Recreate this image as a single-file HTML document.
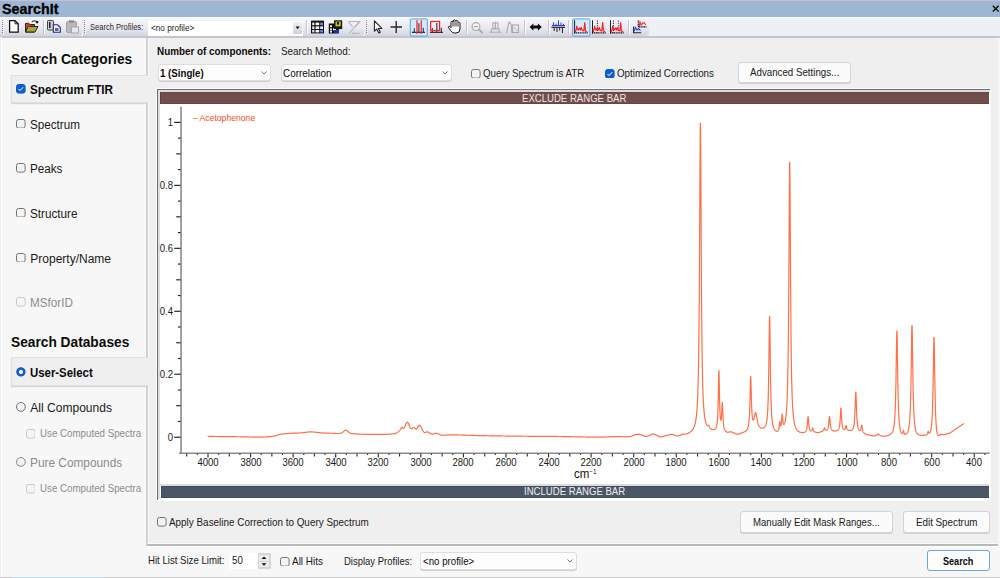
<!DOCTYPE html><html><head><meta charset="utf-8"><style>
html,body{margin:0;padding:0;width:1000px;height:578px;overflow:hidden;background:#f7f7f7;position:relative;font-family:"Liberation Sans", sans-serif}
.t{position:absolute;white-space:nowrap;line-height:1}
</style></head><body>
<div style="position:absolute;left:0px;top:0px;width:1000px;height:17px;background:#9db6d4"></div>
<div style="position:absolute;left:0px;top:0px;width:1000px;height:1px;background:#c9c0d6"></div>
<div class="t" id="t0" style="left:2.00px;top:1.90px;font-size:14.3px;font-weight:700;color:#050505;-webkit-text-stroke:0.35px #050505">SearchIt</div>
<svg style="position:absolute;left:991.6px;top:5.4px" width="7.5" height="7.5"><path d="M0.8 0.8 L6.6 6.6 M6.6 0.8 L0.8 6.6" stroke="#111" stroke-width="1.45"/></svg>
<div style="position:absolute;left:0px;top:17px;width:1000px;height:20px;background:#eef0f8"></div>
<div style="position:absolute;left:0px;top:17px;width:1000px;height:1px;background:#f9fafd"></div>
<div style="position:absolute;left:0px;top:36px;width:1000px;height:1.6px;background:#c4c6ce"></div>
<div style="position:absolute;left:0px;top:37.6px;width:1000px;height:1px;background:#fafafa"></div>
<div style="position:absolute;left:0px;top:18px;width:82px;height:18px;background:linear-gradient(#f6f7fb,#e8e9f1 55%,#d2d4e0);border-radius:0 0 3px 0"></div>
<div style="position:absolute;left:83px;top:18px;width:281px;height:18px;background:linear-gradient(#f6f7fb,#e8e9f1 55%,#d2d4e0);border-radius:0 0 3px 0"></div>
<div style="position:absolute;left:365px;top:18px;width:284px;height:18px;background:linear-gradient(#f6f7fb,#e8e9f1 55%,#d2d4e0);border-radius:0 0 3px 0"></div>
<svg style="position:absolute;left:2px;top:20px" width="3" height="15"><rect x="0" y="0" width="1" height="1" fill="#7d8294"/><rect x="1" y="1" width="1" height="1" fill="#ffffff"/><rect x="0" y="2" width="1" height="1" fill="#7d8294"/><rect x="1" y="3" width="1" height="1" fill="#ffffff"/><rect x="0" y="4" width="1" height="1" fill="#7d8294"/><rect x="1" y="5" width="1" height="1" fill="#ffffff"/><rect x="0" y="6" width="1" height="1" fill="#7d8294"/><rect x="1" y="7" width="1" height="1" fill="#ffffff"/><rect x="0" y="8" width="1" height="1" fill="#7d8294"/><rect x="1" y="9" width="1" height="1" fill="#ffffff"/><rect x="0" y="10" width="1" height="1" fill="#7d8294"/><rect x="1" y="11" width="1" height="1" fill="#ffffff"/><rect x="0" y="12" width="1" height="1" fill="#7d8294"/><rect x="1" y="13" width="1" height="1" fill="#ffffff"/></svg>
<svg style="position:absolute;left:84px;top:20px" width="3" height="15"><rect x="0" y="0" width="1" height="1" fill="#7d8294"/><rect x="1" y="1" width="1" height="1" fill="#ffffff"/><rect x="0" y="2" width="1" height="1" fill="#7d8294"/><rect x="1" y="3" width="1" height="1" fill="#ffffff"/><rect x="0" y="4" width="1" height="1" fill="#7d8294"/><rect x="1" y="5" width="1" height="1" fill="#ffffff"/><rect x="0" y="6" width="1" height="1" fill="#7d8294"/><rect x="1" y="7" width="1" height="1" fill="#ffffff"/><rect x="0" y="8" width="1" height="1" fill="#7d8294"/><rect x="1" y="9" width="1" height="1" fill="#ffffff"/><rect x="0" y="10" width="1" height="1" fill="#7d8294"/><rect x="1" y="11" width="1" height="1" fill="#ffffff"/><rect x="0" y="12" width="1" height="1" fill="#7d8294"/><rect x="1" y="13" width="1" height="1" fill="#ffffff"/></svg>
<svg style="position:absolute;left:366px;top:20px" width="3" height="15"><rect x="0" y="0" width="1" height="1" fill="#7d8294"/><rect x="1" y="1" width="1" height="1" fill="#ffffff"/><rect x="0" y="2" width="1" height="1" fill="#7d8294"/><rect x="1" y="3" width="1" height="1" fill="#ffffff"/><rect x="0" y="4" width="1" height="1" fill="#7d8294"/><rect x="1" y="5" width="1" height="1" fill="#ffffff"/><rect x="0" y="6" width="1" height="1" fill="#7d8294"/><rect x="1" y="7" width="1" height="1" fill="#ffffff"/><rect x="0" y="8" width="1" height="1" fill="#7d8294"/><rect x="1" y="9" width="1" height="1" fill="#ffffff"/><rect x="0" y="10" width="1" height="1" fill="#7d8294"/><rect x="1" y="11" width="1" height="1" fill="#ffffff"/><rect x="0" y="12" width="1" height="1" fill="#7d8294"/><rect x="1" y="13" width="1" height="1" fill="#ffffff"/></svg>
<div style="position:absolute;left:43px;top:20px;width:1px;height:14px;background:#c3c6d2;box-shadow:1px 0 0 #fff"></div>
<div style="position:absolute;left:306px;top:20px;width:1px;height:14px;background:#c3c6d2;box-shadow:1px 0 0 #fff"></div>
<div style="position:absolute;left:466px;top:20px;width:1px;height:14px;background:#c3c6d2;box-shadow:1px 0 0 #fff"></div>
<div style="position:absolute;left:524px;top:20px;width:1px;height:14px;background:#c3c6d2;box-shadow:1px 0 0 #fff"></div>
<div style="position:absolute;left:548px;top:20px;width:1px;height:14px;background:#c3c6d2;box-shadow:1px 0 0 #fff"></div>
<div style="position:absolute;left:568px;top:20px;width:1px;height:14px;background:#c3c6d2;box-shadow:1px 0 0 #fff"></div>
<div style="position:absolute;left:628px;top:20px;width:1px;height:14px;background:#c3c6d2;box-shadow:1px 0 0 #fff"></div>
<div class="t" id="t1" style="left:89.80px;top:23.20px;font-size:8.5px;font-weight:400;color:#2b2b2b;transform:scaleX(0.8871);transform-origin:left center;">Search Profiles:</div>
<div style="position:absolute;left:148px;top:21px;width:154px;height:15px;background:#fff;border-left:1px solid #fff"></div>
<div class="t" id="t2" style="left:151.20px;top:24.01px;font-size:8.5px;font-weight:400;color:#1a1a1a;transform:scaleX(0.9624);transform-origin:left center;">&lt;no profile&gt;</div>
<div style="position:absolute;left:293px;top:22px;width:9px;height:12px;background:linear-gradient(#f0f1f6,#cdd0dc)"></div>
<svg style="position:absolute;left:0;top:0" width="1000" height="40"><path d="M295.6 26.6 H299.6 L297.6 29.2 Z" fill="#111"/><path d="M9.6 20.6 H15 L18.2 23.8 V32.2 H9.6 Z" fill="#fff" stroke="#111" stroke-width="1.25"/><path d="M15 20.6 V23.8 H18.2" fill="none" stroke="#111" stroke-width="0.9"/><path d="M25.5 23.5 H29 L30 24.5 H34.5 V32 H25.5 Z" fill="#7d7d18" stroke="#222" stroke-width="1"/><path d="M25.5 32 L28 26.5 H38 L35 32 Z" fill="#a8a82c" stroke="#222" stroke-width="1"/><path d="M27.5 22 L31.5 25.5 L27.5 28 Z" fill="#e82020"/><path d="M32 22 Q34 19.8 36.5 21.5" stroke="#333" fill="none" stroke-width="1.1"/><rect x="36" y="21" width="2.2" height="2.2" fill="#111"/><rect x="47.5" y="20.5" width="6" height="9.5" rx="0.8" fill="#cfcfcf" stroke="#444" stroke-width="1"/><rect x="49" y="22" width="1.5" height="6" fill="#222"/><path d="M53.3 24.8 H57.6 L60.3 27.5 V32.3 H53.3 Z" fill="#f0f0f8" stroke="#2424a0" stroke-width="1.1"/><rect x="55" y="28" width="3.5" height="3" fill="#666"/><rect x="66.5" y="21.5" width="10" height="11" rx="1.5" fill="#b8b8b8" stroke="#a4a4a4"/><rect x="69" y="20.3" width="5" height="2.4" fill="#8e8e8e"/><rect x="71.5" y="27" width="7" height="6" fill="#e6e6e6" stroke="#a8a8a8"/><rect x="311" y="20.6" width="13" height="12.8" fill="#111"/><rect x="312.2" y="22.6" width="2.2" height="2.6" fill="#eee"/><rect x="312.2" y="26.4" width="2.2" height="2.6" fill="#eee"/><rect x="312.2" y="30.0" width="2.2" height="2.4" fill="#eee"/><rect x="315.6" y="22.6" width="3.6" height="2.6" fill="#fff"/><rect x="315.6" y="26.4" width="3.6" height="2.6" fill="#fff"/><rect x="315.6" y="30.0" width="3.6" height="2.4" fill="#fff"/><rect x="320.2" y="22.6" width="2.8" height="2.6" fill="#6f86f0"/><rect x="320.2" y="26.4" width="2.8" height="2.6" fill="#f4f4ff"/><rect x="320.2" y="30.0" width="2.8" height="2.4" fill="#6f86f0"/><rect x="328.8" y="23.5" width="10" height="10" fill="#111"/><rect x="330" y="25.2" width="2" height="2" fill="#eee"/><rect x="330" y="28.4" width="2" height="2" fill="#eee"/><rect x="330" y="31" width="2" height="1.6" fill="#eee"/><rect x="333" y="28.4" width="3" height="2" fill="#fff"/><rect x="334" y="20.3" width="8.2" height="8.8" fill="#1a1a1a"/><rect x="335.5" y="21.5" width="5.2" height="4.8" fill="#c8c820"/><rect x="337" y="22" width="2" height="2.6" fill="#111"/><rect x="334" y="30" width="4.5" height="3" fill="#1830c8"/><path d="M348.5 21.5 H360 L355 27 M352.5 27 L348.5 21.5" fill="none" stroke="#b4b4b4" stroke-width="1.1"/><path d="M349 33.5 L359.5 21.5" stroke="#b4b4b4" stroke-width="1.1"/><path d="M352 33.3 H359.5" stroke="#b4b4b4" stroke-width="1.1"/><path d="M374.4 20.8 V31.2 L376.8 29 L378.8 33 L380.3 32.2 L378.4 28.4 H381.8 Z" fill="#fff" stroke="#222" stroke-width="1.05" stroke-linejoin="round"/><path d="M396.2 21 V33 M390.5 27 H402" stroke="#2a2a2a" stroke-width="1.4"/><rect x="410.3" y="18.9" width="17" height="17.2" rx="1" fill="#d6e9f8" stroke="#5aa0e8" stroke-width="1"/><rect x="572.7" y="18.9" width="17.2" height="17.2" rx="1" fill="#d6e9f8" stroke="#5aa0e8" stroke-width="1"/><path d="M411.9 32.3 H425.1" stroke="#111" stroke-width="1.1"/><path d="M414.3 28.3 V32.3 M418.9 23.2 V32.3 M423.3 27.7 V32.3" stroke="#2a3a3a" stroke-width="1.1"/><path d="M417 20.2 V34 M421.3 20.2 V34" stroke="#ff2a2a" stroke-width="1.3"/><path d="M430 32.3 H442.9" stroke="#111" stroke-width="1.1"/><path d="M432.3 28 V32.3 M436.8 23 V32.3 M441.3 27.7 V32.3" stroke="#2a3a3a" stroke-width="1.1"/><rect x="430.6" y="21.5" width="9" height="9" fill="none" stroke="#ff2020" stroke-width="1.2"/><path d="M451 27.5 V22.5 Q451 21.3 452.2 21.3 Q453.3 21.3 453.3 22.5 V21 Q453.3 19.9 454.5 19.9 Q455.6 19.9 455.6 21 V21.5 Q455.6 20.5 456.8 20.5 Q457.9 20.5 457.9 21.6 V23 Q457.9 22.2 458.9 22.2 Q460 22.2 460 23.3 V29 Q460 33 456 33 H454.5 Q452.5 33 451.3 31.3 L448.5 27.6 Q448 26.6 449 26.3 Q449.8 26.1 450.5 27 Z" fill="#fff" stroke="#111" stroke-width="1"/><path d="M451.5 22.6 V26.5 H459.5 V23.2 Q459 22.6 458.4 23 V21.7 Q457.5 20.9 456.5 21.4 Q455.5 20.4 454.5 20.4 Q453.6 20.6 453.5 22 Q452.4 21.7 451.5 22.6 Z" fill="#9a9a9a"/><circle cx="476" cy="26.6" r="3.9" fill="#f4f4f4" stroke="#a8a8a8" stroke-width="1.2"/><path d="M474 26.6 H478" stroke="#a0a0a0" stroke-width="1.1"/><path d="M479 29.6 L482.6 33" stroke="#a8a8a8" stroke-width="1.9"/><path d="M489 32.2 H501.5 M491.5 32 V29 H499 V32" fill="none" stroke="#b0b0b0" stroke-width="1.1"/><rect x="492.8" y="23" width="5.2" height="5.2" fill="none" stroke="#acacac" stroke-width="1.1"/><path d="M495.4 21.8 V29" stroke="#acacac" stroke-width="1.1"/><path d="M506.5 33 L509 22 L511 24 L512 33" fill="none" stroke="#a8a8a8" stroke-width="1.1"/><rect x="512.5" y="25" width="6" height="7.5" fill="none" stroke="#a8a8a8" stroke-width="1.1"/><path d="M514 27 L517 30.5" stroke="#b8b8b8" stroke-width="1"/><path d="M529.6 27 L533.4 23.4 V25.6 H537.9 V23.4 L541.7 27 L537.9 30.7 V28.5 H533.4 V30.7 Z" fill="#0a0a0a"/><path d="M552 25.5 H565" stroke="#2a36e8" stroke-width="1.1"/><path d="M553.5 22.3 V25.5 M556 23.6 V25.5 M558.5 20.5 V25.5 M561 22.5 V25.5 M563.5 23.8 V25.5" stroke="#3340f0" stroke-width="1"/><path d="M551.5 27.3 H565" stroke="#222" stroke-width="1.2"/><path d="M554.2 27.5 V31 M557 27.5 V32 M559.6 27.5 V30.5 M562.5 27.5 V33" stroke="#333" stroke-width="1.1"/><path d="M574.5999999999999 20.2 V33.6" stroke="#222" stroke-width="1"/><path d="M574.3 32.8 H587.8" stroke="#111" stroke-width="1.3" stroke-dasharray="1.2 0.6"/><path d="M575.3 32 L576.3 29 L576.8 26 L577.3 29 L578.3 30 L579.3 28 L580.3 30 L581.3 27.5 L582.3 30.5 L583.8 31 L584.8 22.7 L585.5 31 L587.3 32" fill="none" stroke="#ff2020" stroke-width="1.2" stroke-linejoin="round"/><path d="M592.5 20.2 V33.6" stroke="#222" stroke-width="1"/><path d="M592.2 32.8 H605.7" stroke="#111" stroke-width="1.3" stroke-dasharray="1.2 0.6"/><path d="M597.4000000000001 20.5 V32.5" stroke="#222" stroke-width="1" stroke-dasharray="1.3 1"/><path d="M593.2 32 L594.2 29 L594.7 26 L595.2 29 L596.2 30 L597.2 28 L598.2 30 L599.2 27.5 L600.2 30.5 L601.7 31 L602.7 22.7 L603.4000000000001 31 L605.2 32" fill="none" stroke="#ff2020" stroke-width="1.2" stroke-linejoin="round"/><path d="M610.5 20.2 V33.6" stroke="#222" stroke-width="1"/><path d="M610.2 32.8 H623.7" stroke="#111" stroke-width="1.3" stroke-dasharray="1.2 0.6"/><path d="M613.4000000000001 20.5 V32.5" stroke="#222" stroke-width="1" stroke-dasharray="1.3 1"/><path d="M618.4000000000001 20.5 V32.5" stroke="#4040c0" stroke-width="1" stroke-dasharray="1.3 1"/><path d="M611.2 32 L612.2 29 L612.7 26 L613.2 29 L614.2 30 L615.2 28 L616.2 30 L617.2 27.5 L618.2 30.5 L619.7 31 L620.7 22.7 L621.4000000000001 31 L623.2 32" fill="none" stroke="#ff2020" stroke-width="1.2" stroke-linejoin="round"/><path d="M638.3 20.6 V26.9 H646.5" stroke="#111" stroke-width="1.1" fill="none" stroke-dasharray="1.2 0.5"/><path d="M639.2 26 L640 22 L641 25 L642.5 23.5 L644 22.5 L646 25" stroke="#ff2a2a" stroke-width="1.1" fill="none"/><path d="M633.6 26.5 V32.8 H641.2" stroke="#222" stroke-width="1.1" fill="none"/><path d="M634.3 31 L635.5 27.5 L637 30 L638.5 28.5 L640.5 30.5" stroke="#3a3af0" stroke-width="1.1" fill="none"/></svg>
<div style="position:absolute;left:146px;top:38px;width:852px;height:506px;background:#efefef;border-left:2px solid #d2d2d2;border-bottom:2px solid #b9b9b9;box-shadow:inset 1px -1px 0 #fafafa, 0 1px 0 #fff"></div>
<div style="position:absolute;left:998px;top:38px;width:2px;height:508px;background:#f6f6f6"></div>
<div style="position:absolute;left:1px;top:37px;width:1px;height:541px;background:#fff"></div>
<div style="position:absolute;left:0px;top:37px;width:1px;height:541px;background:#eceef6"></div>
<div class="t" id="t3" style="left:10.70px;top:51.00px;font-size:15.5px;font-weight:700;color:#0b0b0b;transform:scaleX(0.8910);transform-origin:left center;">Search Categories</div>
<div style="position:absolute;left:11px;top:74.5px;width:135px;height:26px;background:#efefef;border:1px solid #e0e0e0;border-right:none;box-shadow:0 1px 1px #d6d6d6"></div>
<div style="position:absolute;left:145px;top:75.5px;width:5px;height:26px;background:#efefef"></div>
<svg style="position:absolute;left:16px;top:84px" width="9.6" height="9.6"><rect x="0.5" y="0.5" width="8.6" height="8.6" rx="2" fill="#0b5ecb" stroke="#0b5ecb"/><path d="M2.4 4.9 L4.1 6.6 L7.2 3.2" stroke="#fff" stroke-width="1" fill="none"/></svg>
<div class="t" id="t4" style="left:30.30px;top:84.01px;font-size:12.0px;font-weight:700;color:#0b0b0b;transform:scaleX(0.9725);transform-origin:left center;">Spectrum FTIR</div>
<svg style="position:absolute;left:16px;top:118.6px" width="9.6" height="9.6"><rect x="0.5" y="0.5" width="8.6" height="8.6" rx="2" fill="#f3f3f3" stroke="#747474"/></svg>
<div class="t" id="t5" style="left:30.30px;top:118.60px;font-size:12.0px;font-weight:400;color:#1a1a1a;transform:scaleX(0.9733);transform-origin:left center;">Spectrum</div>
<svg style="position:absolute;left:16px;top:163.2px" width="9.6" height="9.6"><rect x="0.5" y="0.5" width="8.6" height="8.6" rx="2" fill="#f3f3f3" stroke="#747474"/></svg>
<div class="t" id="t6" style="left:30.30px;top:163.21px;font-size:12.0px;font-weight:400;color:#1a1a1a;transform:scaleX(0.9733);transform-origin:left center;">Peaks</div>
<svg style="position:absolute;left:16px;top:207.9px" width="9.6" height="9.6"><rect x="0.5" y="0.5" width="8.6" height="8.6" rx="2" fill="#f3f3f3" stroke="#747474"/></svg>
<div class="t" id="t7" style="left:30.30px;top:207.91px;font-size:12.0px;font-weight:400;color:#1a1a1a;transform:scaleX(0.9733);transform-origin:left center;">Structure</div>
<svg style="position:absolute;left:16px;top:252.5px" width="9.6" height="9.6"><rect x="0.5" y="0.5" width="8.6" height="8.6" rx="2" fill="#f3f3f3" stroke="#747474"/></svg>
<div class="t" id="t8" style="left:30.30px;top:252.51px;font-size:12.0px;font-weight:400;color:#1a1a1a;">Property/Name</div>
<svg style="position:absolute;left:16px;top:297px" width="9.6" height="9.6"><rect x="0.5" y="0.5" width="8.6" height="8.6" rx="2" fill="#f5f5f5" stroke="#c9c9c9"/></svg>
<div class="t" id="t9" style="left:30.30px;top:297.01px;font-size:12.0px;font-weight:400;color:#8c8c8c;transform:scaleX(0.9733);transform-origin:left center;">MSforID</div>
<div class="t" id="t10" style="left:10.70px;top:334.20px;font-size:15.5px;font-weight:700;color:#0b0b0b;transform:scaleX(0.8858);transform-origin:left center;">Search Databases</div>
<div style="position:absolute;left:11px;top:357px;width:135px;height:26.5px;background:#efefef;border:1px solid #e0e0e0;border-right:none;box-shadow:0 1px 1px #d6d6d6"></div>
<div style="position:absolute;left:145px;top:358px;width:5px;height:26.5px;background:#efefef"></div>
<svg style="position:absolute;left:16px;top:367px" width="9.8" height="9.8"><circle cx="4.9" cy="4.9" r="3.4000000000000004" fill="#fff" stroke="#0b5ecb" stroke-width="2.6"/></svg>
<div class="t" id="t11" style="left:30.30px;top:366.60px;font-size:12.0px;font-weight:700;color:#0b0b0b;transform:scaleX(0.9492);transform-origin:left center;">User-Select</div>
<svg style="position:absolute;left:16px;top:402px" width="9.8" height="9.8"><circle cx="4.9" cy="4.9" r="4.4" fill="#f3f3f3" stroke="#6e6e6e"/></svg>
<div class="t" id="t12" style="left:30.30px;top:401.50px;font-size:12.05px;font-weight:400;color:#1a1a1a;">All Compounds</div>
<svg style="position:absolute;left:25.6px;top:429px" width="9.6" height="9.6"><rect x="0.5" y="0.5" width="8.6" height="8.6" rx="2" fill="#f5f5f5" stroke="#c9c9c9"/></svg>
<div class="t" id="t13" style="left:39.80px;top:429.31px;font-size:10.25px;font-weight:400;color:#8c8c8c;transform:scaleX(0.9502);transform-origin:left center;">Use Computed Spectra</div>
<svg style="position:absolute;left:16px;top:457px" width="9.8" height="9.8"><circle cx="4.9" cy="4.9" r="4.4" fill="#f3f3f3" stroke="#8a8a8a"/></svg>
<div class="t" id="t14" style="left:30.30px;top:456.71px;font-size:12.0px;font-weight:400;color:#8c8c8c;transform:scaleX(0.9875);transform-origin:left center;">Pure Compounds</div>
<svg style="position:absolute;left:25.6px;top:484px" width="9.6" height="9.6"><rect x="0.5" y="0.5" width="8.6" height="8.6" rx="2" fill="#f5f5f5" stroke="#c9c9c9"/></svg>
<div class="t" id="t15" style="left:39.80px;top:484.31px;font-size:10.25px;font-weight:400;color:#8c8c8c;transform:scaleX(0.9502);transform-origin:left center;">Use Computed Spectra</div>
<div class="t" id="t16" style="left:157.00px;top:46.62px;font-size:10.25px;font-weight:700;color:#0b0b0b;transform:scaleX(0.9629);transform-origin:left center;">Number of components:</div>
<div class="t" id="t17" style="left:280.60px;top:46.62px;font-size:10.25px;font-weight:400;color:#1a1a1a;transform:scaleX(0.9590);transform-origin:left center;">Search Method:</div>
<div style="position:absolute;left:157.5px;top:64.3px;width:111px;height:15px;background:#fdfdfd;border:1px solid #dedede;border-radius:3px;box-shadow:0 1px 0 #d0d0d0"></div>
<div class="t" id="t18" style="left:160.30px;top:68.81px;font-size:10.25px;font-weight:700;color:#0b0b0b;transform:scaleX(0.9463);transform-origin:left center;">1 (Single)</div>
<svg style="position:absolute;left:261.0px;top:71.3px" width="7" height="4"><path d="M0.5 0.5 L3 3 L5.5 0.5" stroke="#6a6a6a" stroke-width="0.9" fill="none"/></svg>
<div style="position:absolute;left:280.6px;top:64.3px;width:169px;height:15px;background:#fdfdfd;border:1px solid #dedede;border-radius:3px;box-shadow:0 1px 0 #d0d0d0"></div>
<div class="t" id="t19" style="left:283.20px;top:68.81px;font-size:10.25px;font-weight:400;color:#0b0b0b;transform:scaleX(0.9678);transform-origin:left center;">Correlation</div>
<svg style="position:absolute;left:442.1px;top:71.3px" width="7" height="4"><path d="M0.5 0.5 L3 3 L5.5 0.5" stroke="#6a6a6a" stroke-width="0.9" fill="none"/></svg>
<svg style="position:absolute;left:471px;top:68.8px" width="9.6" height="9.6"><rect x="0.5" y="0.5" width="8.6" height="8.6" rx="2" fill="#f3f3f3" stroke="#747474"/></svg>
<div class="t" id="t20" style="left:482.80px;top:68.62px;font-size:10.25px;font-weight:400;color:#1a1a1a;transform:scaleX(0.9463);transform-origin:left center;">Query Spectrum is ATR</div>
<svg style="position:absolute;left:605px;top:68.8px" width="9.6" height="9.6"><rect x="0.5" y="0.5" width="8.6" height="8.6" rx="2" fill="#0b5ecb" stroke="#0b5ecb"/><path d="M2.4 4.9 L4.1 6.6 L7.2 3.2" stroke="#fff" stroke-width="1" fill="none"/></svg>
<div class="t" id="t21" style="left:616.80px;top:68.62px;font-size:10.25px;font-weight:400;color:#1a1a1a;transform:scaleX(0.9561);transform-origin:left center;">Optimized Corrections</div>
<div style="position:absolute;left:738px;top:62px;width:111px;height:19px;background:#fbfbfb;border:1px solid #d4d4d4;border-radius:3px;box-shadow:0 1px 0 #d0d0d0"></div>
<div class="t" id="t22" style="left:750.00px;top:68.01px;font-size:10.25px;font-weight:400;color:#1a1a1a;transform:scaleX(0.9483);transform-origin:left center;">Advanced Settings...</div>
<div style="position:absolute;left:156px;top:87.5px;width:835px;height:413.5px;background:#fafafa"></div>
<div style="position:absolute;left:157px;top:89px;width:833.3px;height:410.6px;background:#fff;border-top:1px solid #707272;border-left:1px solid #6e6e6e;box-sizing:border-box"></div>
<div style="position:absolute;left:158px;top:90px;width:832px;height:2px;background:#dcdcdc"></div>
<div style="position:absolute;left:158px;top:90px;width:1.8px;height:409px;background:#dedede"></div>
<div style="position:absolute;left:160.3px;top:92px;width:828.7px;height:12.3px;background:#714d4c;box-shadow:inset 0 1px 0 #684443, inset 0 -1px 0 #684443, inset 1px 0 0 #5e3a3a"></div>
<div style="position:absolute;left:160.3px;top:484.2px;width:828.7px;height:1.7px;background:#dcdde0"></div>
<div class="t" id="t23" style="left:521.90px;top:93.81px;font-size:10.25px;font-weight:400;color:#efe6e6;transform:scaleX(0.9346);transform-origin:left center;">EXCLUDE RANGE BAR</div>
<div style="position:absolute;left:160.5px;top:485.9px;width:828.4px;height:12.2px;background:#4b5766;box-shadow:inset 0 1px 0 #414b5a, inset 0 -1px 0 #414b5a, inset 1px 0 0 #3e4858"></div>
<div class="t" id="t24" style="left:523.70px;top:486.81px;font-size:10.25px;font-weight:400;color:#eef0f3;transform:scaleX(0.9346);transform-origin:left center;">INCLUDE RANGE BAR</div>
<svg style="position:absolute;left:0;top:0" width="1000" height="578"><path d="M181.05 106.8 V454" stroke="#979797" stroke-width="1.8" fill="none"/><path d="M179 453.25 H989.5" stroke="#8a8a8a" stroke-width="1.5" fill="none"/><path d="M174.20 437.20 H180.6" stroke="#222" stroke-width="1.15"/><path d="M178.00 421.46 H180.6" stroke="#222" stroke-width="1.15"/><path d="M176.20 405.72 H180.6" stroke="#222" stroke-width="1.15"/><path d="M178.00 389.98 H180.6" stroke="#222" stroke-width="1.15"/><path d="M174.20 374.24 H180.6" stroke="#222" stroke-width="1.15"/><path d="M178.00 358.50 H180.6" stroke="#222" stroke-width="1.15"/><path d="M176.20 342.76 H180.6" stroke="#222" stroke-width="1.15"/><path d="M178.00 327.02 H180.6" stroke="#222" stroke-width="1.15"/><path d="M174.20 311.28 H180.6" stroke="#222" stroke-width="1.15"/><path d="M178.00 295.54 H180.6" stroke="#222" stroke-width="1.15"/><path d="M176.20 279.80 H180.6" stroke="#222" stroke-width="1.15"/><path d="M178.00 264.06 H180.6" stroke="#222" stroke-width="1.15"/><path d="M174.20 248.32 H180.6" stroke="#222" stroke-width="1.15"/><path d="M178.00 232.58 H180.6" stroke="#222" stroke-width="1.15"/><path d="M176.20 216.84 H180.6" stroke="#222" stroke-width="1.15"/><path d="M178.00 201.10 H180.6" stroke="#222" stroke-width="1.15"/><path d="M174.20 185.36 H180.6" stroke="#222" stroke-width="1.15"/><path d="M178.00 169.62 H180.6" stroke="#222" stroke-width="1.15"/><path d="M176.20 153.88 H180.6" stroke="#222" stroke-width="1.15"/><path d="M178.00 138.14 H180.6" stroke="#222" stroke-width="1.15"/><path d="M174.20 122.40 H180.6" stroke="#222" stroke-width="1.15"/><path d="M186.72 453.6 V456.40" stroke="#2a2a2a" stroke-width="1.1"/><path d="M197.36 453.6 V455.00" stroke="#2a2a2a" stroke-width="1.1"/><path d="M208.00 453.6 V457.60" stroke="#2a2a2a" stroke-width="1.1"/><path d="M218.64 453.6 V455.00" stroke="#2a2a2a" stroke-width="1.1"/><path d="M229.28 453.6 V456.40" stroke="#2a2a2a" stroke-width="1.1"/><path d="M239.93 453.6 V455.00" stroke="#2a2a2a" stroke-width="1.1"/><path d="M250.57 453.6 V457.60" stroke="#2a2a2a" stroke-width="1.1"/><path d="M261.21 453.6 V455.00" stroke="#2a2a2a" stroke-width="1.1"/><path d="M271.86 453.6 V456.40" stroke="#2a2a2a" stroke-width="1.1"/><path d="M282.50 453.6 V455.00" stroke="#2a2a2a" stroke-width="1.1"/><path d="M293.14 453.6 V457.60" stroke="#2a2a2a" stroke-width="1.1"/><path d="M303.78 453.6 V455.00" stroke="#2a2a2a" stroke-width="1.1"/><path d="M314.43 453.6 V456.40" stroke="#2a2a2a" stroke-width="1.1"/><path d="M325.07 453.6 V455.00" stroke="#2a2a2a" stroke-width="1.1"/><path d="M335.71 453.6 V457.60" stroke="#2a2a2a" stroke-width="1.1"/><path d="M346.35 453.6 V455.00" stroke="#2a2a2a" stroke-width="1.1"/><path d="M357.00 453.6 V456.40" stroke="#2a2a2a" stroke-width="1.1"/><path d="M367.64 453.6 V455.00" stroke="#2a2a2a" stroke-width="1.1"/><path d="M378.28 453.6 V457.60" stroke="#2a2a2a" stroke-width="1.1"/><path d="M388.92 453.6 V455.00" stroke="#2a2a2a" stroke-width="1.1"/><path d="M399.56 453.6 V456.40" stroke="#2a2a2a" stroke-width="1.1"/><path d="M410.21 453.6 V455.00" stroke="#2a2a2a" stroke-width="1.1"/><path d="M420.85 453.6 V457.60" stroke="#2a2a2a" stroke-width="1.1"/><path d="M431.49 453.6 V455.00" stroke="#2a2a2a" stroke-width="1.1"/><path d="M442.13 453.6 V456.40" stroke="#2a2a2a" stroke-width="1.1"/><path d="M452.78 453.6 V455.00" stroke="#2a2a2a" stroke-width="1.1"/><path d="M463.42 453.6 V457.60" stroke="#2a2a2a" stroke-width="1.1"/><path d="M474.06 453.6 V455.00" stroke="#2a2a2a" stroke-width="1.1"/><path d="M484.71 453.6 V456.40" stroke="#2a2a2a" stroke-width="1.1"/><path d="M495.35 453.6 V455.00" stroke="#2a2a2a" stroke-width="1.1"/><path d="M505.99 453.6 V457.60" stroke="#2a2a2a" stroke-width="1.1"/><path d="M516.63 453.6 V455.00" stroke="#2a2a2a" stroke-width="1.1"/><path d="M527.28 453.6 V456.40" stroke="#2a2a2a" stroke-width="1.1"/><path d="M537.92 453.6 V455.00" stroke="#2a2a2a" stroke-width="1.1"/><path d="M548.56 453.6 V457.60" stroke="#2a2a2a" stroke-width="1.1"/><path d="M559.20 453.6 V455.00" stroke="#2a2a2a" stroke-width="1.1"/><path d="M569.85 453.6 V456.40" stroke="#2a2a2a" stroke-width="1.1"/><path d="M580.49 453.6 V455.00" stroke="#2a2a2a" stroke-width="1.1"/><path d="M591.13 453.6 V457.60" stroke="#2a2a2a" stroke-width="1.1"/><path d="M601.77 453.6 V455.00" stroke="#2a2a2a" stroke-width="1.1"/><path d="M612.41 453.6 V456.40" stroke="#2a2a2a" stroke-width="1.1"/><path d="M623.06 453.6 V455.00" stroke="#2a2a2a" stroke-width="1.1"/><path d="M633.70 453.6 V457.60" stroke="#2a2a2a" stroke-width="1.1"/><path d="M644.34 453.6 V455.00" stroke="#2a2a2a" stroke-width="1.1"/><path d="M654.99 453.6 V456.40" stroke="#2a2a2a" stroke-width="1.1"/><path d="M665.63 453.6 V455.00" stroke="#2a2a2a" stroke-width="1.1"/><path d="M676.27 453.6 V457.60" stroke="#2a2a2a" stroke-width="1.1"/><path d="M686.91 453.6 V455.00" stroke="#2a2a2a" stroke-width="1.1"/><path d="M697.56 453.6 V456.40" stroke="#2a2a2a" stroke-width="1.1"/><path d="M708.20 453.6 V455.00" stroke="#2a2a2a" stroke-width="1.1"/><path d="M718.84 453.6 V457.60" stroke="#2a2a2a" stroke-width="1.1"/><path d="M729.48 453.6 V455.00" stroke="#2a2a2a" stroke-width="1.1"/><path d="M740.12 453.6 V456.40" stroke="#2a2a2a" stroke-width="1.1"/><path d="M750.77 453.6 V455.00" stroke="#2a2a2a" stroke-width="1.1"/><path d="M761.41 453.6 V457.60" stroke="#2a2a2a" stroke-width="1.1"/><path d="M772.05 453.6 V455.00" stroke="#2a2a2a" stroke-width="1.1"/><path d="M782.70 453.6 V456.40" stroke="#2a2a2a" stroke-width="1.1"/><path d="M793.34 453.6 V455.00" stroke="#2a2a2a" stroke-width="1.1"/><path d="M803.98 453.6 V457.60" stroke="#2a2a2a" stroke-width="1.1"/><path d="M814.62 453.6 V455.00" stroke="#2a2a2a" stroke-width="1.1"/><path d="M825.26 453.6 V456.40" stroke="#2a2a2a" stroke-width="1.1"/><path d="M835.91 453.6 V455.00" stroke="#2a2a2a" stroke-width="1.1"/><path d="M846.55 453.6 V457.60" stroke="#2a2a2a" stroke-width="1.1"/><path d="M857.19 453.6 V455.00" stroke="#2a2a2a" stroke-width="1.1"/><path d="M867.84 453.6 V456.40" stroke="#2a2a2a" stroke-width="1.1"/><path d="M878.48 453.6 V455.00" stroke="#2a2a2a" stroke-width="1.1"/><path d="M889.12 453.6 V457.60" stroke="#2a2a2a" stroke-width="1.1"/><path d="M899.76 453.6 V455.00" stroke="#2a2a2a" stroke-width="1.1"/><path d="M910.41 453.6 V456.40" stroke="#2a2a2a" stroke-width="1.1"/><path d="M921.05 453.6 V455.00" stroke="#2a2a2a" stroke-width="1.1"/><path d="M931.69 453.6 V457.60" stroke="#2a2a2a" stroke-width="1.1"/><path d="M942.33 453.6 V455.00" stroke="#2a2a2a" stroke-width="1.1"/><path d="M952.98 453.6 V456.40" stroke="#2a2a2a" stroke-width="1.1"/><path d="M963.62 453.6 V455.00" stroke="#2a2a2a" stroke-width="1.1"/><path d="M974.26 453.6 V457.60" stroke="#2a2a2a" stroke-width="1.1"/><path d="M984.90 453.6 V455.00" stroke="#2a2a2a" stroke-width="1.1"/></svg>
<div class="t" id="t25" style="left:133.00px;top:432.01px;font-size:10.6px;font-weight:400;color:#1a1a1a;width:40px;text-align:right;transform:scaleX(0.9);transform-origin:right center">0</div>
<div class="t" id="t26" style="left:133.00px;top:369.04px;font-size:10.6px;font-weight:400;color:#1a1a1a;width:40px;text-align:right;transform:scaleX(0.9);transform-origin:right center">0.2</div>
<div class="t" id="t27" style="left:133.00px;top:306.08px;font-size:10.6px;font-weight:400;color:#1a1a1a;width:40px;text-align:right;transform:scaleX(0.9);transform-origin:right center">0.4</div>
<div class="t" id="t28" style="left:133.00px;top:243.13px;font-size:10.6px;font-weight:400;color:#1a1a1a;width:40px;text-align:right;transform:scaleX(0.9);transform-origin:right center">0.6</div>
<div class="t" id="t29" style="left:133.00px;top:180.16px;font-size:10.6px;font-weight:400;color:#1a1a1a;width:40px;text-align:right;transform:scaleX(0.9);transform-origin:right center">0.8</div>
<div class="t" id="t30" style="left:133.00px;top:117.21px;font-size:10.6px;font-weight:400;color:#1a1a1a;width:40px;text-align:right;transform:scaleX(0.9);transform-origin:right center">1</div>
<div class="t" id="t31" style="left:178.00px;top:456.71px;font-size:10.6px;font-weight:400;color:#1a1a1a;width:60px;text-align:center;transform:scaleX(0.9);transform-origin:center">4000</div>
<div class="t" id="t32" style="left:220.57px;top:456.71px;font-size:10.6px;font-weight:400;color:#1a1a1a;width:60px;text-align:center;transform:scaleX(0.9);transform-origin:center">3800</div>
<div class="t" id="t33" style="left:263.14px;top:456.71px;font-size:10.6px;font-weight:400;color:#1a1a1a;width:60px;text-align:center;transform:scaleX(0.9);transform-origin:center">3600</div>
<div class="t" id="t34" style="left:305.71px;top:456.71px;font-size:10.6px;font-weight:400;color:#1a1a1a;width:60px;text-align:center;transform:scaleX(0.9);transform-origin:center">3400</div>
<div class="t" id="t35" style="left:348.28px;top:456.71px;font-size:10.6px;font-weight:400;color:#1a1a1a;width:60px;text-align:center;transform:scaleX(0.9);transform-origin:center">3200</div>
<div class="t" id="t36" style="left:390.85px;top:456.71px;font-size:10.6px;font-weight:400;color:#1a1a1a;width:60px;text-align:center;transform:scaleX(0.9);transform-origin:center">3000</div>
<div class="t" id="t37" style="left:433.42px;top:456.71px;font-size:10.6px;font-weight:400;color:#1a1a1a;width:60px;text-align:center;transform:scaleX(0.9);transform-origin:center">2800</div>
<div class="t" id="t38" style="left:475.99px;top:456.71px;font-size:10.6px;font-weight:400;color:#1a1a1a;width:60px;text-align:center;transform:scaleX(0.9);transform-origin:center">2600</div>
<div class="t" id="t39" style="left:518.56px;top:456.71px;font-size:10.6px;font-weight:400;color:#1a1a1a;width:60px;text-align:center;transform:scaleX(0.9);transform-origin:center">2400</div>
<div class="t" id="t40" style="left:561.13px;top:456.71px;font-size:10.6px;font-weight:400;color:#1a1a1a;width:60px;text-align:center;transform:scaleX(0.9);transform-origin:center">2200</div>
<div class="t" id="t41" style="left:603.70px;top:456.71px;font-size:10.6px;font-weight:400;color:#1a1a1a;width:60px;text-align:center;transform:scaleX(0.9);transform-origin:center">2000</div>
<div class="t" id="t42" style="left:646.27px;top:456.71px;font-size:10.6px;font-weight:400;color:#1a1a1a;width:60px;text-align:center;transform:scaleX(0.9);transform-origin:center">1800</div>
<div class="t" id="t43" style="left:688.84px;top:456.71px;font-size:10.6px;font-weight:400;color:#1a1a1a;width:60px;text-align:center;transform:scaleX(0.9);transform-origin:center">1600</div>
<div class="t" id="t44" style="left:731.41px;top:456.71px;font-size:10.6px;font-weight:400;color:#1a1a1a;width:60px;text-align:center;transform:scaleX(0.9);transform-origin:center">1400</div>
<div class="t" id="t45" style="left:773.98px;top:456.71px;font-size:10.6px;font-weight:400;color:#1a1a1a;width:60px;text-align:center;transform:scaleX(0.9);transform-origin:center">1200</div>
<div class="t" id="t46" style="left:816.55px;top:456.71px;font-size:10.6px;font-weight:400;color:#1a1a1a;width:60px;text-align:center;transform:scaleX(0.9);transform-origin:center">1000</div>
<div class="t" id="t47" style="left:859.12px;top:456.71px;font-size:10.6px;font-weight:400;color:#1a1a1a;width:60px;text-align:center;transform:scaleX(0.9);transform-origin:center">800</div>
<div class="t" id="t48" style="left:901.69px;top:456.71px;font-size:10.6px;font-weight:400;color:#1a1a1a;width:60px;text-align:center;transform:scaleX(0.9);transform-origin:center">600</div>
<div class="t" id="t49" style="left:944.26px;top:456.71px;font-size:10.6px;font-weight:400;color:#1a1a1a;width:60px;text-align:center;transform:scaleX(0.9);transform-origin:center">400</div>
<div class="t" id="t50" style="left:574.40px;top:467.82px;font-size:12.0px;font-weight:400;color:#111;transform:scaleX(0.9583);transform-origin:left center;">cm<span style="font-size:6.5px;position:relative;top:-3.6px;margin-left:0px">−1</span></div>
<div class="t" id="t51" style="left:192.60px;top:114.41px;font-size:8.64px;font-weight:400;color:#f5501c;">− Acetophenone</div>
<svg style="position:absolute;left:0;top:0" width="1000" height="578"><polyline points="207.70,436.40 207.95,436.40 208.20,436.41 208.45,436.41 208.70,436.41 208.95,436.41 209.20,436.42 209.45,436.42 209.70,436.42 209.95,436.43 210.20,436.43 210.45,436.43 210.70,436.43 210.95,436.44 211.20,436.44 211.45,436.44 211.70,436.45 211.95,436.45 212.20,436.45 212.45,436.45 212.70,436.46 212.95,436.46 213.20,436.46 213.45,436.47 213.70,436.47 213.95,436.47 214.20,436.47 214.45,436.48 214.70,436.48 214.95,436.48 215.20,436.49 215.45,436.49 215.70,436.49 215.95,436.49 216.20,436.50 216.45,436.50 216.70,436.50 216.95,436.51 217.20,436.51 217.45,436.51 217.70,436.51 217.95,436.52 218.20,436.52 218.45,436.52 218.70,436.53 218.95,436.53 219.20,436.53 219.45,436.53 219.70,436.54 219.95,436.54 220.20,436.54 220.45,436.54 220.70,436.55 220.95,436.55 221.20,436.55 221.45,436.56 221.70,436.56 221.95,436.56 222.20,436.56 222.45,436.57 222.70,436.57 222.95,436.57 223.20,436.58 223.45,436.58 223.70,436.58 223.95,436.58 224.20,436.59 224.45,436.59 224.70,436.59 224.95,436.60 225.20,436.60 225.45,436.60 225.70,436.60 225.95,436.61 226.20,436.61 226.45,436.61 226.70,436.62 226.95,436.62 227.20,436.62 227.45,436.62 227.70,436.63 227.95,436.63 228.20,436.63 228.45,436.64 228.70,436.64 228.95,436.64 229.20,436.64 229.45,436.65 229.70,436.65 229.95,436.65 230.20,436.66 230.45,436.66 230.70,436.66 230.95,436.66 231.20,436.67 231.45,436.67 231.70,436.67 231.95,436.68 232.20,436.68 232.45,436.68 232.70,436.68 232.95,436.69 233.20,436.69 233.45,436.69 233.70,436.70 233.95,436.70 234.20,436.70 234.45,436.71 234.70,436.71 234.95,436.71 235.20,436.71 235.45,436.72 235.70,436.72 235.95,436.72 236.20,436.73 236.45,436.73 236.70,436.73 236.95,436.74 237.20,436.74 237.45,436.74 237.70,436.75 237.95,436.75 238.20,436.75 238.45,436.75 238.70,436.76 238.95,436.76 239.20,436.76 239.45,436.77 239.70,436.77 239.95,436.77 240.20,436.78 240.45,436.78 240.70,436.78 240.95,436.79 241.20,436.79 241.45,436.79 241.70,436.80 241.95,436.80 242.00,436.80 242.25,436.80 242.50,436.81 242.75,436.81 243.00,436.82 243.25,436.82 243.50,436.82 243.75,436.83 244.00,436.83 244.25,436.84 244.50,436.84 244.75,436.85 245.00,436.86 245.25,436.86 245.50,436.87 245.75,436.87 246.00,436.88 246.25,436.89 246.50,436.89 246.75,436.90 247.00,436.91 247.25,436.91 247.50,436.92 247.75,436.93 248.00,436.93 248.25,436.94 248.50,436.95 248.75,436.95 249.00,436.96 249.25,436.97 249.50,436.97 249.75,436.98 250.00,436.99 250.25,436.99 250.50,437.00 250.75,437.01 251.00,437.01 251.25,437.02 251.50,437.03 251.75,437.03 252.00,437.04 252.25,437.05 252.50,437.05 252.75,437.06 253.00,437.06 253.25,437.07 253.50,437.07 253.75,437.08 254.00,437.09 254.25,437.09 254.50,437.09 254.75,437.10 255.00,437.10 255.25,437.11 255.50,437.11 255.75,437.11 256.00,437.12 256.25,437.12 256.50,437.12 256.75,437.13 257.00,437.13 257.25,437.13 257.50,437.13 257.75,437.13 258.00,437.13 258.25,437.13 258.50,437.13 258.75,437.13 259.00,437.13 259.25,437.13 259.50,437.13 259.75,437.13 260.00,437.13 260.25,437.12 260.50,437.12 260.75,437.12 261.00,437.11 261.25,437.11 261.50,437.10 261.60,437.10 261.85,437.09 262.10,437.09 262.35,437.08 262.60,437.07 262.85,437.07 263.10,437.06 263.35,437.05 263.60,437.04 263.85,437.03 264.10,437.02 264.35,437.01 264.60,437.00 264.85,436.99 265.10,436.98 265.35,436.96 265.60,436.95 265.85,436.94 266.10,436.92 266.35,436.91 266.60,436.89 266.85,436.87 267.10,436.86 267.35,436.84 267.60,436.82 267.85,436.80 268.10,436.78 268.35,436.76 268.60,436.74 268.85,436.72 269.10,436.70 269.35,436.68 269.60,436.65 269.85,436.63 270.10,436.61 270.35,436.58 270.60,436.55 270.85,436.53 271.10,436.50 271.35,436.47 271.60,436.44 271.85,436.41 272.10,436.38 272.35,436.35 272.60,436.32 272.85,436.29 273.10,436.26 273.35,436.22 273.60,436.19 273.85,436.15 274.10,436.11 274.20,436.10 274.45,436.06 274.70,436.01 274.95,435.95 275.20,435.88 275.45,435.81 275.70,435.73 275.95,435.65 276.20,435.56 276.45,435.47 276.70,435.38 276.95,435.28 277.20,435.19 277.45,435.09 277.70,435.00 277.95,434.91 278.20,434.82 278.45,434.74 278.70,434.66 278.95,434.59 279.20,434.53 279.45,434.47 279.70,434.42 279.80,434.40 280.05,434.36 280.30,434.32 280.55,434.28 280.80,434.24 281.05,434.21 281.30,434.17 281.55,434.14 281.80,434.10 282.05,434.07 282.30,434.04 282.55,434.01 282.80,433.98 283.05,433.95 283.30,433.92 283.55,433.90 283.80,433.87 284.05,433.84 284.30,433.82 284.55,433.79 284.80,433.77 285.05,433.75 285.30,433.73 285.55,433.70 285.80,433.68 286.05,433.66 286.30,433.64 286.55,433.62 286.80,433.60 287.05,433.58 287.30,433.56 287.55,433.54 287.80,433.53 288.05,433.51 288.30,433.49 288.55,433.47 288.80,433.45 289.05,433.44 289.30,433.42 289.55,433.40 289.80,433.38 290.05,433.37 290.30,433.35 290.55,433.33 290.80,433.31 291.00,433.30 291.25,433.28 291.50,433.27 291.75,433.25 292.00,433.24 292.25,433.22 292.50,433.21 292.75,433.20 293.00,433.19 293.25,433.18 293.50,433.17 293.75,433.16 294.00,433.15 294.25,433.14 294.50,433.14 294.75,433.13 295.00,433.12 295.25,433.12 295.50,433.11 295.75,433.10 296.00,433.10 296.25,433.09 296.50,433.08 296.75,433.08 297.00,433.07 297.25,433.06 297.50,433.06 297.75,433.05 298.00,433.04 298.25,433.03 298.50,433.02 298.75,433.01 299.00,433.00 299.25,432.99 299.50,432.98 299.75,432.97 300.00,432.95 300.25,432.94 300.50,432.92 300.75,432.90 300.80,432.90 301.05,432.88 301.30,432.86 301.55,432.84 301.80,432.81 302.05,432.79 302.30,432.76 302.55,432.73 302.80,432.70 303.05,432.67 303.30,432.64 303.55,432.61 303.80,432.57 304.05,432.54 304.30,432.51 304.55,432.47 304.80,432.44 305.05,432.40 305.30,432.37 305.55,432.33 305.80,432.30 306.05,432.27 306.30,432.23 306.55,432.20 306.80,432.17 307.05,432.14 307.30,432.11 307.55,432.08 307.80,432.06 308.05,432.03 308.30,432.01 308.55,431.99 308.80,431.97 309.05,431.95 309.30,431.94 309.55,431.92 309.80,431.91 310.05,431.91 310.30,431.90 310.55,431.90 310.60,431.90 310.85,431.90 311.10,431.90 311.35,431.91 311.60,431.92 311.85,431.93 312.10,431.94 312.35,431.95 312.60,431.97 312.85,431.98 313.10,432.00 313.35,432.02 313.60,432.04 313.85,432.06 314.10,432.08 314.35,432.11 314.60,432.13 314.85,432.16 315.10,432.19 315.35,432.21 315.60,432.24 315.85,432.27 316.10,432.30 316.35,432.33 316.60,432.36 316.85,432.39 317.10,432.42 317.35,432.45 317.60,432.48 317.85,432.51 318.10,432.54 318.35,432.57 318.60,432.60 318.85,432.63 319.10,432.66 319.35,432.68 319.60,432.71 319.85,432.74 320.10,432.76 320.35,432.79 320.60,432.81 320.85,432.83 321.10,432.85 321.35,432.87 321.60,432.89 321.80,432.90 322.05,432.92 322.30,432.93 322.55,432.94 322.80,432.96 323.05,432.97 323.30,432.99 323.55,433.00 323.80,433.01 324.05,433.02 324.30,433.03 324.55,433.04 324.80,433.06 325.05,433.07 325.30,433.08 325.55,433.09 325.80,433.09 326.05,433.10 326.30,433.11 326.55,433.12 326.80,433.13 327.05,433.14 327.30,433.15 327.55,433.15 327.80,433.16 328.05,433.17 328.30,433.18 328.55,433.18 328.80,433.19 329.05,433.20 329.30,433.20 329.55,433.21 329.80,433.22 330.05,433.22 330.30,433.23 330.55,433.24 330.80,433.24 331.05,433.25 331.30,433.26 331.55,433.26 331.80,433.27 332.05,433.27 332.30,433.28 332.55,433.29 332.80,433.29 333.00,433.30 333.25,433.31 333.50,433.32 333.75,433.33 334.00,433.34 334.25,433.36 334.50,433.37 334.75,433.39 335.00,433.40 335.25,433.42 335.50,433.43 335.75,433.45 336.00,433.46 336.25,433.48 336.50,433.49 336.75,433.50 337.00,433.51 337.25,433.52 337.50,433.52 337.75,433.52 338.00,433.52 338.25,433.52 338.50,433.52 338.75,433.51 339.00,433.49 339.25,433.48 339.50,433.46 339.75,433.43 340.00,433.40 340.25,433.36 340.50,433.29 340.75,433.21 341.00,433.11 341.25,433.00 341.50,432.88 341.75,432.75 342.00,432.60 342.25,432.46 342.50,432.31 342.75,432.15 343.00,432.00 343.25,431.82 343.50,431.61 343.75,431.37 344.00,431.12 344.25,430.86 344.50,430.62 344.75,430.40 345.00,430.22 345.25,430.08 345.50,430.01 345.60,430.00 345.85,430.02 346.10,430.10 346.35,430.23 346.60,430.40 346.85,430.60 347.10,430.82 347.35,431.04 347.60,431.26 347.85,431.48 348.10,431.67 348.30,431.80 348.55,431.96 348.80,432.12 349.05,432.29 349.30,432.47 349.55,432.64 349.80,432.81 350.05,432.97 350.30,433.12 350.55,433.26 350.80,433.38 351.05,433.47 351.30,433.55 351.55,433.59 351.60,433.60 351.85,433.62 352.10,433.65 352.35,433.67 352.60,433.70 352.85,433.72 353.10,433.74 353.35,433.76 353.60,433.78 353.85,433.80 354.10,433.82 354.35,433.84 354.60,433.86 354.85,433.88 355.10,433.90 355.35,433.92 355.60,433.94 355.85,433.95 356.10,433.97 356.35,433.99 356.60,434.00 356.85,434.02 357.10,434.03 357.35,434.05 357.60,434.06 357.85,434.08 358.10,434.09 358.35,434.10 358.60,434.11 358.85,434.13 359.10,434.14 359.35,434.15 359.60,434.16 359.85,434.17 360.10,434.18 360.35,434.19 360.60,434.20 360.85,434.21 361.10,434.22 361.35,434.23 361.60,434.24 361.85,434.25 362.10,434.26 362.35,434.26 362.60,434.27 362.85,434.28 363.10,434.29 363.35,434.29 363.60,434.30 363.85,434.31 364.10,434.31 364.35,434.32 364.60,434.32 364.85,434.33 365.10,434.33 365.35,434.34 365.60,434.34 365.85,434.35 366.10,434.35 366.35,434.35 366.60,434.36 366.85,434.36 367.10,434.36 367.35,434.37 367.60,434.37 367.85,434.37 368.10,434.38 368.35,434.38 368.60,434.38 368.85,434.38 369.10,434.38 369.35,434.39 369.60,434.39 369.85,434.39 370.10,434.39 370.35,434.39 370.60,434.39 370.85,434.39 371.10,434.40 371.35,434.40 371.60,434.40 371.85,434.40 372.10,434.40 372.35,434.40 372.60,434.40 372.85,434.40 373.10,434.40 373.35,434.40 373.60,434.40 373.85,434.40 374.10,434.40 374.35,434.40 374.40,434.40 374.65,434.40 374.90,434.40 375.15,434.40 375.40,434.40 375.65,434.40 375.90,434.40 376.15,434.40 376.40,434.41 376.65,434.41 376.90,434.41 377.15,434.41 377.40,434.41 377.65,434.41 377.90,434.41 378.15,434.41 378.40,434.41 378.65,434.42 378.90,434.42 379.15,434.42 379.40,434.42 379.65,434.42 379.90,434.42 380.15,434.42 380.40,434.42 380.65,434.42 380.90,434.42 381.15,434.42 381.40,434.42 381.65,434.42 381.90,434.42 382.15,434.42 382.40,434.41 382.65,434.41 382.90,434.41 383.15,434.41 383.40,434.40 383.65,434.40 383.90,434.40 384.15,434.39 384.40,434.39 384.65,434.38 384.90,434.38 385.15,434.37 385.40,434.37 385.65,434.36 385.90,434.35 386.15,434.34 386.40,434.33 386.65,434.32 386.90,434.31 387.15,434.30 387.40,434.29 387.65,434.28 387.90,434.27 388.15,434.26 388.40,434.24 388.65,434.23 388.90,434.21 389.15,434.20 389.40,434.18 389.65,434.16 389.90,434.14 390.15,434.12 390.40,434.10 390.65,434.08 390.90,434.06 391.15,434.04 391.40,434.02 391.65,433.99 391.90,433.97 392.15,433.94 392.40,433.91 392.65,433.88 392.90,433.86 393.15,433.83 393.40,433.79 393.65,433.76 393.90,433.73 394.15,433.69 394.40,433.66 394.65,433.62 394.80,433.60 395.05,433.55 395.30,433.49 395.55,433.41 395.80,433.32 396.05,433.21 396.30,433.08 396.55,432.95 396.80,432.80 397.05,432.64 397.30,432.47 397.55,432.30 397.80,432.11 398.05,431.92 398.30,431.72 398.55,431.51 398.80,431.30 399.05,431.08 399.30,430.87 399.55,430.64 399.60,430.60 399.85,430.33 400.10,429.98 400.35,429.58 400.60,429.15 400.85,428.70 401.10,428.27 401.35,427.88 401.60,427.55 401.85,427.30 402.00,427.20 402.25,427.19 402.50,427.38 402.75,427.69 403.00,428.02 403.25,428.32 403.50,428.48 403.75,428.44 403.80,428.40 404.05,428.11 404.30,427.73 404.55,427.27 404.80,426.75 405.05,426.18 405.30,425.60 405.55,425.00 405.80,424.42 406.05,423.87 406.30,423.37 406.55,422.93 406.80,422.58 407.05,422.34 407.30,422.21 407.40,422.20 407.65,422.29 407.90,422.53 408.15,422.91 408.40,423.39 408.65,423.95 408.90,424.57 409.15,425.22 409.40,425.88 409.65,426.52 409.90,427.11 410.15,427.63 410.40,428.05 410.65,428.36 410.70,428.40 410.95,428.56 411.20,428.64 411.45,428.64 411.70,428.59 411.95,428.50 412.20,428.37 412.45,428.22 412.70,428.06 412.95,427.91 413.20,427.77 413.45,427.67 413.70,427.60 413.95,427.59 414.00,427.60 414.25,427.69 414.50,427.86 414.75,428.09 415.00,428.36 415.25,428.63 415.50,428.88 415.75,429.08 416.00,429.21 416.25,429.24 416.40,429.20 416.65,429.02 416.90,428.72 417.15,428.33 417.40,427.87 417.65,427.38 417.90,426.88 418.15,426.40 418.40,425.96 418.65,425.59 418.90,425.32 419.15,425.18 419.40,425.20 419.65,425.34 419.90,425.54 420.15,425.81 420.40,426.12 420.65,426.49 420.90,426.89 421.15,427.32 421.40,427.78 421.65,428.25 421.90,428.73 422.15,429.22 422.40,429.70 422.65,430.17 422.90,430.62 423.15,431.05 423.40,431.44 423.65,431.80 423.90,432.10 424.15,432.36 424.20,432.40 424.45,432.56 424.70,432.63 424.95,432.63 425.20,432.57 425.45,432.46 425.70,432.33 425.95,432.18 426.20,432.04 426.45,431.92 426.70,431.82 426.95,431.78 427.20,431.80 427.45,431.87 427.70,431.96 427.95,432.07 428.20,432.19 428.45,432.32 428.70,432.47 428.95,432.62 429.20,432.78 429.45,432.95 429.70,433.11 429.95,433.27 430.20,433.43 430.45,433.58 430.70,433.72 430.95,433.85 431.20,433.96 431.45,434.06 431.70,434.14 431.95,434.19 432.00,434.20 432.25,434.22 432.50,434.22 432.75,434.18 433.00,434.13 433.25,434.06 433.50,433.97 433.75,433.87 434.00,433.77 434.25,433.66 434.50,433.56 434.75,433.46 435.00,433.37 435.25,433.30 435.50,433.24 435.75,433.20 436.00,433.19 436.20,433.20 436.45,433.23 436.70,433.29 436.95,433.35 437.20,433.43 437.45,433.52 437.70,433.62 437.95,433.73 438.20,433.85 438.45,433.97 438.70,434.09 438.95,434.22 439.20,434.34 439.45,434.46 439.70,434.58 439.95,434.70 440.20,434.81 440.45,434.90 440.70,434.99 440.95,435.07 441.20,435.13 441.45,435.18 441.60,435.20 441.85,435.23 442.10,435.25 442.35,435.26 442.60,435.27 442.85,435.28 443.10,435.28 443.35,435.28 443.60,435.27 443.85,435.26 444.10,435.25 444.35,435.24 444.60,435.22 444.85,435.20 445.10,435.18 445.35,435.16 445.60,435.13 445.85,435.11 446.10,435.08 446.35,435.05 446.60,435.03 446.85,435.00 447.10,434.97 447.35,434.95 447.60,434.92 447.85,434.90 448.10,434.88 448.35,434.86 448.60,434.84 448.85,434.83 449.10,434.82 449.35,434.81 449.60,434.80 449.85,434.80 450.00,434.80 450.25,434.80 450.50,434.81 450.75,434.81 451.00,434.81 451.25,434.82 451.50,434.82 451.75,434.82 452.00,434.83 452.25,434.83 452.50,434.83 452.75,434.84 453.00,434.84 453.25,434.85 453.50,434.85 453.75,434.86 454.00,434.86 454.25,434.87 454.50,434.87 454.75,434.88 455.00,434.88 455.25,434.89 455.50,434.89 455.75,434.90 456.00,434.90 456.25,434.91 456.50,434.92 456.75,434.92 457.00,434.93 457.25,434.93 457.50,434.94 457.75,434.95 458.00,434.95 458.25,434.96 458.50,434.97 458.75,434.97 459.00,434.98 459.25,434.99 459.50,434.99 459.75,435.00 460.00,435.01 460.25,435.02 460.50,435.02 460.75,435.03 461.00,435.04 461.25,435.05 461.50,435.05 461.75,435.06 462.00,435.07 462.25,435.08 462.50,435.08 462.75,435.09 463.00,435.10 463.25,435.11 463.50,435.12 463.75,435.12 464.00,435.13 464.25,435.14 464.50,435.15 464.75,435.16 465.00,435.16 465.25,435.17 465.50,435.18 465.75,435.19 466.00,435.20 466.25,435.20 466.50,435.21 466.75,435.22 467.00,435.23 467.25,435.24 467.50,435.25 467.75,435.25 468.00,435.26 468.25,435.27 468.50,435.28 468.75,435.29 469.00,435.29 469.25,435.30 469.50,435.31 469.75,435.32 470.00,435.33 470.25,435.33 470.50,435.34 470.75,435.35 471.00,435.36 471.25,435.37 471.50,435.37 471.75,435.38 472.00,435.39 472.25,435.40 472.50,435.41 472.75,435.41 473.00,435.42 473.25,435.43 473.50,435.44 473.75,435.44 474.00,435.45 474.25,435.46 474.50,435.46 474.75,435.47 475.00,435.48 475.25,435.49 475.50,435.49 475.75,435.50 476.00,435.51 476.25,435.51 476.50,435.52 476.75,435.53 477.00,435.53 477.25,435.54 477.50,435.54 477.75,435.55 478.00,435.56 478.25,435.56 478.50,435.57 478.75,435.57 479.00,435.58 479.25,435.58 479.50,435.59 479.75,435.59 480.00,435.60 480.25,435.60 480.50,435.61 480.75,435.61 481.00,435.62 481.25,435.62 481.50,435.63 481.75,435.63 482.00,435.64 482.25,435.64 482.50,435.65 482.75,435.65 483.00,435.66 483.25,435.66 483.50,435.67 483.75,435.67 484.00,435.68 484.25,435.68 484.50,435.69 484.75,435.69 485.00,435.70 485.25,435.70 485.50,435.71 485.75,435.71 486.00,435.71 486.25,435.72 486.50,435.72 486.75,435.73 487.00,435.73 487.25,435.74 487.50,435.74 487.75,435.75 488.00,435.75 488.25,435.75 488.50,435.76 488.75,435.76 489.00,435.77 489.25,435.77 489.50,435.78 489.75,435.78 490.00,435.79 490.25,435.79 490.50,435.79 490.75,435.80 491.00,435.80 491.25,435.81 491.50,435.81 491.75,435.81 492.00,435.82 492.25,435.82 492.50,435.83 492.75,435.83 493.00,435.84 493.25,435.84 493.50,435.84 493.75,435.85 494.00,435.85 494.25,435.86 494.50,435.86 494.75,435.86 495.00,435.87 495.25,435.87 495.50,435.88 495.75,435.88 496.00,435.88 496.25,435.89 496.50,435.89 496.75,435.89 497.00,435.90 497.25,435.90 497.50,435.91 497.75,435.91 498.00,435.91 498.25,435.92 498.50,435.92 498.75,435.93 499.00,435.93 499.25,435.93 499.50,435.94 499.75,435.94 500.00,435.94 500.25,435.95 500.50,435.95 500.75,435.95 501.00,435.96 501.25,435.96 501.50,435.97 501.75,435.97 502.00,435.97 502.25,435.98 502.50,435.98 502.75,435.98 503.00,435.99 503.25,435.99 503.50,435.99 503.75,436.00 504.00,436.00 504.25,436.00 504.50,436.01 504.75,436.01 505.00,436.01 505.25,436.02 505.50,436.02 505.75,436.02 506.00,436.03 506.25,436.03 506.50,436.03 506.75,436.04 507.00,436.04 507.25,436.04 507.50,436.05 507.75,436.05 508.00,436.05 508.25,436.06 508.50,436.06 508.75,436.06 509.00,436.07 509.25,436.07 509.50,436.07 509.75,436.08 510.00,436.08 510.25,436.08 510.50,436.09 510.75,436.09 511.00,436.09 511.25,436.10 511.50,436.10 511.75,436.10 512.00,436.11 512.25,436.11 512.50,436.11 512.75,436.11 513.00,436.12 513.25,436.12 513.50,436.12 513.75,436.13 514.00,436.13 514.25,436.13 514.50,436.14 514.75,436.14 515.00,436.14 515.25,436.15 515.50,436.15 515.75,436.15 516.00,436.15 516.25,436.16 516.50,436.16 516.75,436.16 517.00,436.17 517.25,436.17 517.50,436.17 517.75,436.17 518.00,436.18 518.25,436.18 518.50,436.18 518.75,436.19 519.00,436.19 519.25,436.19 519.50,436.19 519.75,436.20 520.00,436.20 520.25,436.20 520.50,436.21 520.75,436.21 521.00,436.21 521.25,436.21 521.50,436.22 521.75,436.22 522.00,436.22 522.25,436.22 522.50,436.23 522.75,436.23 523.00,436.23 523.25,436.23 523.50,436.24 523.75,436.24 524.00,436.24 524.25,436.24 524.50,436.24 524.75,436.25 525.00,436.25 525.25,436.25 525.50,436.25 525.75,436.26 526.00,436.26 526.25,436.26 526.50,436.26 526.75,436.26 527.00,436.27 527.25,436.27 527.50,436.27 527.75,436.27 528.00,436.27 528.25,436.27 528.50,436.28 528.75,436.28 529.00,436.28 529.25,436.28 529.50,436.28 529.75,436.29 530.00,436.29 530.25,436.29 530.50,436.29 530.75,436.29 531.00,436.29 531.25,436.29 531.50,436.30 531.75,436.30 532.00,436.30 532.25,436.30 532.50,436.30 532.75,436.30 533.00,436.31 533.25,436.31 533.50,436.31 533.75,436.31 534.00,436.31 534.25,436.31 534.50,436.31 534.75,436.32 535.00,436.32 535.25,436.32 535.50,436.32 535.75,436.32 536.00,436.32 536.25,436.32 536.50,436.33 536.75,436.33 537.00,436.33 537.25,436.33 537.50,436.33 537.75,436.33 538.00,436.33 538.25,436.33 538.50,436.34 538.75,436.34 539.00,436.34 539.25,436.34 539.50,436.34 539.75,436.34 540.00,436.34 540.25,436.35 540.50,436.35 540.75,436.35 541.00,436.35 541.25,436.35 541.50,436.35 541.75,436.35 542.00,436.35 542.25,436.36 542.50,436.36 542.75,436.36 543.00,436.36 543.25,436.36 543.50,436.36 543.75,436.36 544.00,436.37 544.25,436.37 544.50,436.37 544.75,436.37 545.00,436.37 545.25,436.37 545.50,436.37 545.75,436.38 546.00,436.38 546.25,436.38 546.50,436.38 546.75,436.38 547.00,436.38 547.25,436.39 547.50,436.39 547.75,436.39 548.00,436.39 548.25,436.39 548.50,436.39 548.75,436.40 549.00,436.40 549.25,436.40 549.50,436.40 549.75,436.40 550.00,436.40 550.25,436.41 550.50,436.41 550.75,436.41 551.00,436.41 551.25,436.41 551.50,436.42 551.75,436.42 552.00,436.42 552.25,436.42 552.50,436.42 552.75,436.43 553.00,436.43 553.25,436.43 553.50,436.43 553.75,436.43 554.00,436.44 554.25,436.44 554.50,436.44 554.75,436.44 555.00,436.45 555.25,436.45 555.50,436.45 555.75,436.45 556.00,436.46 556.25,436.46 556.50,436.46 556.75,436.46 557.00,436.47 557.25,436.47 557.50,436.47 557.75,436.47 558.00,436.48 558.25,436.48 558.50,436.48 558.75,436.48 559.00,436.49 559.25,436.49 559.50,436.49 559.75,436.50 560.00,436.50 560.25,436.50 560.50,436.51 560.75,436.51 561.00,436.51 561.25,436.52 561.50,436.52 561.75,436.52 562.00,436.53 562.25,436.53 562.50,436.54 562.75,436.54 563.00,436.54 563.25,436.55 563.50,436.55 563.75,436.56 564.00,436.56 564.25,436.56 564.50,436.57 564.75,436.57 565.00,436.58 565.25,436.58 565.50,436.59 565.75,436.59 566.00,436.60 566.25,436.60 566.50,436.60 566.75,436.61 567.00,436.61 567.25,436.62 567.50,436.62 567.75,436.63 568.00,436.63 568.25,436.64 568.50,436.64 568.75,436.65 569.00,436.66 569.25,436.66 569.50,436.67 569.75,436.67 570.00,436.68 570.25,436.68 570.50,436.69 570.75,436.69 571.00,436.70 571.25,436.70 571.50,436.71 571.75,436.71 572.00,436.72 572.25,436.73 572.50,436.73 572.75,436.74 573.00,436.74 573.25,436.75 573.50,436.75 573.75,436.76 574.00,436.77 574.25,436.77 574.50,436.78 574.75,436.78 575.00,436.79 575.25,436.79 575.50,436.80 575.75,436.81 576.00,436.81 576.25,436.82 576.50,436.82 576.75,436.83 577.00,436.83 577.25,436.84 577.50,436.85 577.75,436.85 578.00,436.86 578.25,436.86 578.50,436.87 578.75,436.87 579.00,436.88 579.25,436.89 579.50,436.89 579.75,436.90 580.00,436.90 580.25,436.91 580.50,436.91 580.75,436.92 581.00,436.93 581.25,436.93 581.50,436.94 581.75,436.94 582.00,436.95 582.25,436.95 582.50,436.96 582.75,436.96 583.00,436.97 583.25,436.98 583.50,436.98 583.75,436.99 584.00,436.99 584.25,437.00 584.50,437.00 584.75,437.01 585.00,437.01 585.25,437.02 585.50,437.02 585.75,437.03 586.00,437.03 586.25,437.04 586.50,437.04 586.75,437.05 587.00,437.05 587.25,437.06 587.50,437.06 587.75,437.06 588.00,437.07 588.25,437.07 588.50,437.08 588.75,437.08 589.00,437.09 589.25,437.09 589.50,437.10 589.75,437.10 590.00,437.10 590.25,437.11 590.50,437.11 590.75,437.12 591.00,437.12 591.25,437.12 591.50,437.13 591.75,437.13 592.00,437.13 592.25,437.14 592.50,437.14 592.75,437.14 593.00,437.15 593.25,437.15 593.50,437.15 593.75,437.16 594.00,437.16 594.25,437.16 594.50,437.16 594.75,437.17 595.00,437.17 595.25,437.17 595.50,437.17 595.75,437.18 596.00,437.18 596.25,437.18 596.50,437.18 596.75,437.18 597.00,437.19 597.25,437.19 597.50,437.19 597.75,437.19 598.00,437.19 598.25,437.19 598.50,437.20 598.75,437.20 599.00,437.20 599.25,437.20 599.50,437.20 599.75,437.20 600.00,437.20 600.25,437.20 600.50,437.20 600.75,437.20 601.00,437.19 601.25,437.19 601.50,437.19 601.75,437.18 602.00,437.18 602.25,437.17 602.50,437.16 602.75,437.15 603.00,437.15 603.25,437.14 603.50,437.13 603.75,437.12 604.00,437.11 604.25,437.10 604.50,437.08 604.75,437.07 605.00,437.06 605.25,437.05 605.50,437.03 605.75,437.02 606.00,437.01 606.25,436.99 606.50,436.98 606.75,436.97 607.00,436.95 607.25,436.94 607.50,436.92 607.75,436.91 608.00,436.89 608.25,436.88 608.50,436.86 608.75,436.85 609.00,436.83 609.25,436.82 609.50,436.81 609.75,436.79 610.00,436.78 610.25,436.76 610.50,436.75 610.75,436.74 611.00,436.73 611.25,436.71 611.50,436.70 611.75,436.69 612.00,436.68 612.25,436.67 612.50,436.66 612.75,436.65 613.00,436.64 613.25,436.63 613.50,436.62 613.75,436.62 614.00,436.61 614.25,436.60 614.40,436.60 614.65,436.60 614.90,436.59 615.15,436.59 615.40,436.59 615.65,436.59 615.90,436.59 616.15,436.59 616.40,436.59 616.65,436.59 616.90,436.59 617.15,436.60 617.40,436.60 617.65,436.61 617.90,436.61 618.15,436.62 618.40,436.62 618.65,436.63 618.90,436.64 619.15,436.64 619.40,436.65 619.65,436.66 619.90,436.66 620.15,436.67 620.40,436.68 620.65,436.69 620.90,436.70 621.15,436.70 621.40,436.71 621.65,436.72 621.90,436.72 622.15,436.73 622.40,436.74 622.65,436.74 622.90,436.75 623.15,436.76 623.40,436.76 623.65,436.77 623.90,436.77 624.15,436.77 624.40,436.78 624.65,436.78 624.90,436.78 625.15,436.78 625.40,436.78 625.65,436.78 625.90,436.78 626.15,436.78 626.40,436.78 626.65,436.77 626.90,436.77 627.15,436.76 627.40,436.75 627.65,436.74 627.90,436.73 628.15,436.72 628.40,436.71 628.65,436.70 628.90,436.68 629.15,436.67 629.40,436.65 629.65,436.63 629.90,436.61 630.00,436.60 630.25,436.57 630.50,436.52 630.75,436.46 631.00,436.38 631.25,436.29 631.50,436.19 631.75,436.09 632.00,435.97 632.25,435.86 632.50,435.74 632.75,435.61 633.00,435.49 633.25,435.37 633.50,435.26 633.75,435.15 634.00,435.05 634.25,434.96 634.50,434.88 634.75,434.81 634.80,434.80 635.05,434.74 635.30,434.69 635.55,434.64 635.80,434.59 636.05,434.54 636.30,434.50 636.55,434.46 636.80,434.43 637.05,434.40 637.30,434.37 637.55,434.35 637.80,434.34 638.05,434.33 638.30,434.32 638.55,434.32 638.80,434.33 639.05,434.34 639.30,434.37 639.55,434.39 639.60,434.40 639.85,434.44 640.10,434.49 640.35,434.54 640.60,434.61 640.85,434.68 641.10,434.76 641.35,434.84 641.60,434.93 641.85,435.02 642.10,435.11 642.35,435.21 642.60,435.31 642.85,435.41 643.10,435.51 643.35,435.60 643.60,435.70 643.85,435.79 644.10,435.88 644.35,435.97 644.60,436.05 644.85,436.12 645.10,436.19 645.35,436.25 645.60,436.30 645.85,436.34 646.10,436.37 646.35,436.39 646.60,436.40 646.80,436.40 647.05,436.38 647.30,436.35 647.55,436.29 647.80,436.23 648.05,436.14 648.30,436.05 648.55,435.95 648.80,435.83 649.05,435.71 649.30,435.58 649.55,435.45 649.80,435.31 650.05,435.18 650.30,435.04 650.55,434.91 650.80,434.78 651.05,434.65 651.30,434.53 651.55,434.42 651.80,434.32 652.05,434.23 652.30,434.15 652.55,434.09 652.80,434.04 653.05,434.01 653.30,434.00 653.40,434.00 653.65,434.02 653.90,434.05 654.15,434.11 654.40,434.18 654.65,434.26 654.90,434.36 655.15,434.47 655.40,434.59 655.65,434.72 655.90,434.86 656.15,435.00 656.40,435.14 656.65,435.29 656.90,435.44 657.15,435.59 657.40,435.74 657.65,435.88 657.90,436.02 658.15,436.15 658.40,436.28 658.65,436.39 658.90,436.50 659.15,436.59 659.40,436.67 659.65,436.74 659.90,436.79 660.00,436.80 660.25,436.83 660.50,436.84 660.75,436.84 661.00,436.83 661.25,436.81 661.50,436.78 661.75,436.74 662.00,436.69 662.25,436.64 662.50,436.58 662.75,436.51 663.00,436.45 663.25,436.37 663.50,436.30 663.75,436.22 664.00,436.15 664.25,436.07 664.50,435.99 664.75,435.92 665.00,435.85 665.25,435.78 665.50,435.71 665.75,435.65 666.00,435.60 666.25,435.55 666.50,435.49 666.75,435.43 667.00,435.37 667.25,435.30 667.50,435.23 667.75,435.17 668.00,435.10 668.25,435.03 668.50,434.96 668.75,434.89 669.00,434.82 669.25,434.76 669.50,434.70 669.75,434.64 670.00,434.59 670.25,434.54 670.50,434.50 670.75,434.47 671.00,434.44 671.25,434.42 671.50,434.40 671.75,434.40 672.00,434.40 672.25,434.42 672.50,434.45 672.75,434.51 673.00,434.57 673.25,434.65 673.50,434.73 673.75,434.83 674.00,434.93 674.25,435.04 674.50,435.15 674.75,435.26 675.00,435.37 675.25,435.47 675.50,435.58 675.75,435.67 676.00,435.76 676.25,435.83 676.50,435.90 676.75,435.95 677.00,435.98 677.25,436.00 677.40,436.00 677.65,435.99 677.90,435.96 678.15,435.92 678.40,435.86 678.65,435.79 678.90,435.72 679.15,435.63 679.40,435.54 679.65,435.44 679.90,435.33 680.15,435.22 680.40,435.11 680.65,435.00 680.90,434.89 681.15,434.78 681.40,434.67 681.65,434.57 681.90,434.48 682.15,434.39 682.40,434.31 682.65,434.24 682.80,434.20 683.05,434.15 683.30,434.11 683.55,434.08 683.80,434.06 684.05,434.04 684.30,434.03 684.55,434.03 684.80,434.03 685.05,434.03 685.30,434.02 685.55,434.02 685.80,434.01 686.25,433.92 686.35,433.88 686.45,433.85 686.55,433.82 686.65,433.78 686.75,433.75 686.85,433.71 686.95,433.67 687.05,433.64 687.15,433.60 687.25,433.56 687.35,433.52 687.45,433.48 687.55,433.44 687.65,433.40 687.75,433.36 687.85,433.32 687.95,433.27 688.05,433.23 688.15,433.19 688.25,433.14 688.35,433.10 688.45,433.05 688.55,433.00 688.65,432.95 688.75,432.90 688.85,432.85 688.95,432.80 689.05,432.75 689.15,432.69 689.25,432.64 689.35,432.58 689.45,432.52 689.55,432.46 689.65,432.40 689.75,432.34 689.85,432.28 689.95,432.21 690.05,432.15 690.15,432.08 690.25,432.01 690.35,431.94 690.45,431.87 690.55,431.79 690.65,431.72 690.75,431.64 690.85,431.56 690.95,431.48 691.05,431.39 691.15,431.30 691.25,431.21 691.35,431.12 691.45,431.03 691.55,430.93 691.65,430.83 691.75,430.72 691.85,430.62 691.95,430.51 692.05,430.39 692.15,430.28 692.25,430.15 692.35,430.03 692.45,429.90 692.55,429.76 692.65,429.63 692.75,429.48 692.85,429.33 692.95,429.18 693.05,429.02 693.15,428.85 693.25,428.68 693.35,428.50 693.45,428.32 693.55,428.12 693.65,427.92 693.75,427.71 693.85,427.49 693.95,427.26 694.05,427.02 694.15,426.78 694.25,426.52 694.35,426.24 694.45,425.96 694.55,425.66 694.65,425.35 694.75,425.02 694.85,424.67 694.95,424.31 695.05,423.93 695.15,423.53 695.25,423.10 695.35,422.66 695.45,422.18 695.55,421.68 695.65,421.15 695.75,420.59 695.85,420.00 695.95,419.36 696.05,418.69 696.15,417.97 696.25,417.21 696.35,416.39 696.45,415.52 696.55,414.58 696.65,413.57 696.75,412.49 696.85,411.33 696.95,410.08 697.05,408.72 697.15,407.26 697.25,405.67 697.35,403.94 697.45,402.06 697.55,400.00 697.65,397.76 697.75,395.30 697.85,392.60 697.95,389.62 698.05,386.34 698.15,382.70 698.25,378.67 698.35,374.19 698.45,369.19 698.55,363.60 698.65,357.35 698.75,350.34 698.85,342.46 698.95,333.60 699.05,323.63 699.15,312.42 699.25,299.85 699.35,285.81 699.45,270.23 699.55,253.12 699.65,234.59 699.75,214.97 699.85,194.79 699.95,174.89 700.05,156.43 700.15,140.75 700.25,129.27 700.35,123.18 700.45,123.17 700.55,129.23 700.65,140.68 700.75,156.33 700.85,174.77 700.95,194.64 701.05,214.79 701.15,234.39 701.25,252.89 701.35,269.98 701.45,285.53 701.55,299.55 701.65,312.09 701.75,323.27 701.85,333.21 701.95,342.05 702.05,349.90 702.15,356.88 702.25,363.11 702.35,368.66 702.45,373.63 702.55,378.09 702.65,382.09 702.75,385.70 702.85,388.96 702.95,391.91 703.05,394.58 703.15,397.01 703.25,399.23 703.35,401.25 703.45,403.11 703.55,404.80 703.65,406.37 703.75,407.80 703.85,409.13 703.95,410.35 704.05,411.48 704.15,412.53 704.25,413.51 704.35,414.41 704.45,415.26 704.55,416.04 704.65,416.77 704.75,417.46 704.85,418.10 704.95,418.70 705.05,419.26 705.15,419.78 705.25,420.28 705.35,420.74 705.45,421.17 705.55,421.58 705.65,421.96 705.75,422.32 705.85,422.66 705.95,422.98 706.05,423.27 706.15,423.55 706.25,423.81 706.35,424.06 706.45,424.28 706.55,424.49 706.65,424.68 706.75,424.86 706.85,425.02 706.95,425.16 707.05,425.29 707.15,425.40 707.25,425.48 707.35,425.55 707.45,425.60 707.55,425.63 707.65,425.63 707.75,425.61 707.85,425.56 707.95,425.49 708.05,425.41 708.15,425.32 708.25,425.23 708.35,425.16 708.45,425.14 708.55,425.16 708.65,425.25 708.75,425.41 708.85,425.62 708.95,425.88 709.05,426.15 709.15,426.43 709.25,426.70 709.35,426.96 709.45,427.20 709.55,427.42 709.65,427.62 709.75,427.81 709.85,427.97 709.95,428.12 710.05,428.25 710.15,428.37 710.25,428.48 710.35,428.58 710.45,428.67 710.55,428.75 710.65,428.82 710.75,428.89 710.85,428.95 710.95,429.01 711.05,429.06 711.15,429.11 711.25,429.15 711.35,429.19 711.45,429.23 711.55,429.26 711.65,429.29 711.75,429.32 711.85,429.34 711.95,429.36 712.05,429.38 712.15,429.39 712.25,429.42 712.35,429.44 712.45,429.47 712.55,429.49 712.65,429.52 712.75,429.54 712.85,429.55 712.95,429.57 713.05,429.58 713.15,429.59 713.25,429.59 713.35,429.60 713.45,429.60 713.55,429.60 713.65,429.59 713.75,429.58 713.85,429.57 713.95,429.56 714.05,429.54 714.15,429.51 714.25,429.49 714.35,429.46 714.45,429.42 714.55,429.38 714.65,429.33 714.75,429.28 714.85,429.22 714.95,429.16 715.05,429.09 715.15,429.01 715.25,428.92 715.35,428.82 715.45,428.71 715.55,428.59 715.65,428.45 715.75,428.31 715.85,428.14 715.95,427.96 716.05,427.75 716.15,427.53 716.25,427.27 716.35,426.99 716.45,426.67 716.55,426.32 716.65,425.92 716.75,425.46 716.85,424.95 716.95,424.37 717.05,423.70 717.15,422.93 717.25,422.05 717.35,421.02 717.45,419.83 717.55,418.44 717.65,416.81 717.75,414.89 717.85,412.62 717.95,409.93 718.05,406.75 718.15,403.01 718.25,398.66 718.35,393.72 718.45,388.28 718.55,382.65 718.65,377.36 718.75,373.12 718.85,370.73 718.95,370.68 719.05,372.98 719.15,377.12 719.25,382.31 719.35,387.84 719.45,393.17 719.55,398.00 719.65,402.22 719.75,405.82 719.85,408.85 719.95,411.38 720.05,413.47 720.15,415.18 720.25,416.59 720.35,417.71 720.45,418.61 720.55,419.29 720.65,419.78 720.75,420.09 720.85,420.23 720.95,420.19 721.05,419.98 721.15,419.57 721.25,418.95 721.35,418.09 721.45,416.97 721.55,415.56 721.65,413.84 721.75,411.82 721.85,409.55 721.95,407.18 722.05,404.94 722.15,403.19 722.25,402.26 722.35,402.42 722.45,403.64 722.55,405.71 722.65,408.26 722.75,410.96 722.85,413.56 722.95,415.94 723.05,418.03 723.15,419.83 723.25,421.38 723.35,422.69 723.45,423.81 723.55,424.76 723.65,425.58 723.75,426.28 723.85,426.89 723.95,427.42 724.05,427.88 724.15,428.29 724.25,428.65 724.35,428.97 724.45,429.26 724.55,429.51 724.65,429.74 724.75,429.95 724.85,430.14 724.95,430.32 725.05,430.47 725.15,430.62 725.25,430.75 725.35,430.88 725.45,430.99 725.55,431.10 725.65,431.20 725.75,431.29 725.85,431.38 725.95,431.46 726.05,431.54 726.15,431.61 726.25,431.68 726.35,431.74 726.45,431.81 726.55,431.86 726.65,431.92 726.75,431.97 726.85,432.02 726.95,432.07 727.05,432.12 727.15,432.16 727.25,432.20 727.35,432.24 727.45,432.28 727.55,432.30 727.65,432.29 727.75,432.29 727.85,432.28 727.95,432.27 728.05,432.26 728.15,432.25 728.25,432.24 728.35,432.23 728.45,432.22 728.55,432.20 728.65,432.19 728.75,432.18 728.85,432.16 728.95,432.14 729.05,432.13 729.15,432.11 729.25,432.09 729.35,432.07 729.45,432.05 729.55,432.03 729.65,432.01 729.75,431.99 729.85,431.97 729.95,431.95 730.05,431.93 730.15,431.90 730.25,431.88 730.35,431.86 730.45,431.83 730.55,431.81 730.65,431.79 730.75,431.76 730.85,431.74 730.95,431.71 731.05,431.72 731.15,431.77 731.25,431.82 731.35,431.86 731.45,431.91 731.55,431.95 731.65,432.00 731.75,432.04 731.85,432.09 731.95,432.13 732.05,432.18 732.15,432.22 732.25,432.26 732.35,432.31 732.45,432.35 732.55,432.39 732.65,432.44 732.75,432.48 732.85,432.52 732.95,432.57 733.05,432.61 733.15,432.65 733.25,432.69 733.35,432.74 733.45,432.78 733.55,432.82 733.65,432.86 733.75,432.90 733.85,432.94 733.95,432.98 734.05,433.03 734.15,433.07 734.25,433.11 734.35,433.15 734.45,433.19 734.55,433.23 734.65,433.27 734.75,433.31 734.85,433.35 734.95,433.39 735.05,433.43 735.15,433.47 735.25,433.51 735.35,433.55 735.45,433.58 735.55,433.62 735.65,433.66 735.75,433.70 735.85,433.74 735.95,433.78 736.05,433.82 736.15,433.85 736.25,433.89 736.35,433.93 736.45,433.97 736.55,434.01 736.65,434.04 736.75,434.08 736.85,434.12 736.95,434.15 737.05,434.19 737.15,434.23 737.25,434.27 737.35,434.30 737.45,434.34 737.55,434.37 737.65,434.41 737.75,434.45 737.85,434.48 737.95,434.48 738.05,434.44 738.15,434.40 738.25,434.36 738.35,434.32 738.45,434.28 738.55,434.24 738.65,434.20 738.75,434.16 738.85,434.12 738.95,434.08 739.05,434.04 739.15,433.99 739.25,433.95 739.35,433.91 739.45,433.87 739.55,433.83 739.65,433.78 739.75,433.74 739.85,433.70 739.95,433.65 740.05,433.61 740.15,433.57 740.25,433.52 740.35,433.48 740.45,433.43 740.55,433.39 740.65,433.34 740.75,433.30 740.85,433.25 740.95,433.21 741.05,433.16 741.15,433.11 741.25,433.07 741.35,433.02 741.45,432.97 741.55,432.92 741.65,432.87 741.75,432.82 741.85,432.78 741.95,432.73 742.05,432.69 742.15,432.66 742.25,432.63 742.35,432.60 742.45,432.57 742.55,432.55 742.65,432.52 742.75,432.48 742.85,432.45 742.95,432.42 743.05,432.39 743.15,432.35 743.25,432.32 743.35,432.29 743.45,432.25 743.55,432.21 743.65,432.17 743.75,432.14 743.85,432.10 743.95,432.06 744.05,432.01 744.15,431.97 744.25,431.92 744.35,431.88 744.45,431.83 744.55,431.78 744.65,431.73 744.75,431.68 744.85,431.62 744.95,431.57 745.05,431.51 745.15,431.45 745.25,431.39 745.35,431.32 745.45,431.25 745.55,431.18 745.65,431.11 745.75,431.03 745.85,430.95 745.95,430.87 746.05,430.78 746.15,430.68 746.25,430.59 746.35,430.48 746.45,430.37 746.55,430.26 746.65,430.14 746.75,430.01 746.85,429.87 746.95,429.73 747.05,429.57 747.15,429.40 747.25,429.23 747.35,429.04 747.45,428.83 747.55,428.61 747.65,428.37 747.75,428.11 747.85,427.83 747.95,427.53 748.05,427.19 748.15,426.82 748.25,426.42 748.35,425.97 748.45,425.48 748.55,424.93 748.65,424.32 748.75,423.63 748.85,422.86 748.95,421.98 749.05,420.99 749.15,419.86 749.25,418.57 749.35,417.09 749.45,415.38 749.55,413.41 749.65,411.13 749.75,408.51 749.85,405.50 749.95,402.07 750.05,398.22 750.15,394.03 750.25,389.62 750.35,385.25 750.45,381.31 750.55,378.27 750.65,376.56 750.75,376.46 750.85,377.98 750.95,380.83 751.05,384.57 751.15,388.74 751.25,392.95 751.35,396.94 751.45,400.58 751.55,403.80 751.65,406.60 751.75,409.00 751.85,411.05 751.95,412.79 752.05,414.25 752.15,415.49 752.25,416.52 752.35,417.38 752.45,418.09 752.55,418.67 752.65,419.14 752.75,419.51 752.85,419.79 752.95,419.98 753.05,420.11 753.15,420.17 753.25,420.17 753.35,420.11 753.45,419.99 753.55,419.83 753.65,419.62 753.75,419.36 753.85,419.05 753.95,418.71 754.05,418.33 754.15,417.91 754.25,417.47 754.35,416.99 754.45,416.50 754.55,415.99 754.65,415.48 754.75,414.98 754.85,414.49 754.95,414.03 755.05,413.61 755.15,413.24 755.25,412.93 755.35,412.70 755.45,412.55 755.55,412.49 755.65,412.53 755.75,412.66 755.85,412.88 755.95,413.19 756.05,413.57 756.15,414.02 756.25,414.52 756.35,415.06 756.45,415.64 756.55,416.24 756.65,416.85 756.75,417.46 756.85,418.07 756.95,418.66 757.05,419.24 757.15,419.80 757.25,420.34 757.35,420.85 757.45,421.34 757.55,421.80 757.65,422.24 757.75,422.65 757.85,423.03 757.95,423.40 758.05,423.74 758.15,424.05 758.25,424.35 758.35,424.63 758.45,424.89 758.55,425.13 758.65,425.36 758.75,425.57 758.85,425.77 758.95,425.95 759.05,426.12 759.15,426.28 759.25,426.43 759.35,426.57 759.45,426.72 759.55,426.85 759.65,426.98 759.75,427.09 759.85,427.20 759.95,427.30 760.05,427.40 760.15,427.49 760.25,427.57 760.35,427.64 760.45,427.72 760.55,427.78 760.65,427.84 760.75,427.90 760.85,427.95 760.95,427.99 761.05,428.04 761.15,428.07 761.25,428.11 761.35,428.14 761.45,428.16 761.55,428.19 761.65,428.20 761.75,428.22 761.85,428.23 761.95,428.24 762.05,428.24 762.15,428.25 762.25,428.24 762.35,428.24 762.45,428.23 762.55,428.21 762.65,428.20 762.75,428.18 762.85,428.15 762.95,428.13 763.05,428.09 763.15,428.06 763.25,428.02 763.35,427.97 763.45,427.93 763.55,427.88 763.65,427.85 763.75,427.81 763.85,427.77 763.95,427.72 764.05,427.66 764.15,427.60 764.25,427.53 764.35,427.45 764.45,427.37 764.55,427.28 764.65,427.18 764.75,427.07 764.85,426.95 764.95,426.82 765.05,426.68 765.15,426.53 765.25,426.37 765.35,426.19 765.45,425.99 765.55,425.78 765.65,425.55 765.75,425.30 765.85,425.03 765.95,424.73 766.05,424.41 766.15,424.06 766.25,423.67 766.35,423.25 766.45,422.79 766.55,422.29 766.65,421.73 766.75,421.12 766.85,420.45 766.95,419.71 767.05,418.89 767.15,417.97 767.25,416.96 767.35,415.82 767.45,414.56 767.55,413.13 767.65,411.54 767.75,409.73 767.85,407.70 767.95,405.39 768.05,402.76 768.15,399.77 768.25,396.36 768.35,392.48 768.45,388.04 768.55,382.99 768.65,377.27 768.75,370.85 768.85,363.72 768.95,355.95 769.05,347.75 769.15,339.42 769.25,331.47 769.35,324.56 769.45,319.40 769.55,316.65 769.65,316.67 769.75,319.48 769.85,324.68 769.95,331.64 770.05,339.64 770.15,348.01 770.25,356.27 770.35,364.08 770.45,371.26 770.55,377.74 770.65,383.50 770.75,388.60 770.85,393.08 770.95,397.02 771.05,400.48 771.15,403.52 771.25,406.19 771.35,408.55 771.45,410.63 771.55,412.48 771.65,414.13 771.75,415.60 771.85,416.92 771.95,418.10 772.05,419.16 772.15,420.13 772.25,421.00 772.35,421.79 772.45,422.51 772.55,423.17 772.65,423.77 772.75,424.32 772.85,424.83 772.95,425.30 773.05,425.73 773.15,426.13 773.25,426.50 773.35,426.85 773.45,427.17 773.55,427.47 773.65,427.75 773.75,428.00 773.85,428.25 773.95,428.48 774.05,428.69 774.15,428.89 774.25,429.08 774.35,429.25 774.45,429.42 774.55,429.57 774.65,429.72 774.75,429.86 774.85,429.99 774.95,430.11 775.05,430.23 775.15,430.34 775.25,430.44 775.35,430.54 775.45,430.63 775.55,430.71 775.65,430.79 775.75,430.86 775.85,430.93 775.95,431.00 776.05,431.06 776.15,431.11 776.25,431.16 776.35,431.21 776.45,431.25 776.55,431.28 776.65,431.30 776.75,431.30 776.85,431.29 776.95,431.28 777.05,431.26 777.15,431.24 777.25,431.21 777.35,431.17 777.45,431.13 777.55,431.07 777.65,431.01 777.75,430.94 777.85,430.86 777.95,430.76 778.05,430.65 778.15,430.52 778.25,430.38 778.35,430.20 778.45,430.00 778.55,429.76 778.65,429.48 778.75,429.15 778.85,428.75 778.95,428.27 779.05,427.70 779.15,427.01 779.25,426.20 779.35,425.26 779.45,424.24 779.55,423.20 779.65,422.30 779.75,421.72 779.85,421.59 779.95,421.91 780.05,422.54 780.15,423.30 780.25,424.04 780.35,424.67 780.45,425.16 780.55,425.50 780.65,425.69 780.75,425.75 780.85,425.68 780.95,425.48 781.05,425.16 781.15,424.71 781.25,424.12 781.35,423.38 781.45,422.47 781.55,421.38 781.65,420.13 781.75,418.74 781.85,417.28 781.95,415.90 782.05,414.78 782.15,414.11 782.25,414.04 782.35,414.55 782.45,415.52 782.55,416.76 782.65,418.07 782.75,419.32 782.85,420.45 782.95,421.41 783.05,422.21 783.15,422.85 783.25,423.37 783.35,423.76 783.45,424.06 783.55,424.27 783.65,424.42 783.75,424.49 783.85,424.52 783.95,424.49 784.05,424.42 784.15,424.32 784.25,424.17 784.35,423.99 784.45,423.78 784.55,423.53 784.65,423.25 784.75,422.94 784.85,422.59 784.95,422.22 785.05,421.80 785.15,421.36 785.25,420.87 785.35,420.34 785.45,419.77 785.55,419.16 785.65,418.49 785.75,417.78 785.85,417.00 785.95,416.16 786.05,415.26 786.15,414.28 786.25,413.21 786.35,412.06 786.45,410.81 786.55,409.45 786.65,407.97 786.75,406.35 786.85,404.57 786.95,402.63 787.05,400.50 787.15,398.16 787.25,395.57 787.35,392.72 787.45,389.55 787.55,386.04 787.65,382.13 787.75,377.77 787.85,372.89 787.95,367.43 788.05,361.29 788.15,354.40 788.25,346.65 788.35,337.92 788.45,328.11 788.55,317.10 788.65,304.80 788.75,291.14 788.85,276.15 788.95,259.91 789.05,242.71 789.15,225.02 789.25,207.58 789.35,191.40 789.45,177.66 789.55,167.60 789.65,162.28 789.75,162.28 789.85,167.62 789.95,177.68 790.05,191.43 790.15,207.63 790.25,225.08 790.35,242.77 790.45,259.99 790.55,276.23 790.65,291.24 790.75,304.90 790.85,317.22 790.95,328.24 791.05,338.06 791.15,346.80 791.25,354.57 791.35,361.47 791.45,367.62 791.55,373.09 791.65,377.98 791.75,382.36 791.85,386.28 791.95,389.81 792.05,392.99 792.15,395.87 792.25,398.47 792.35,400.83 792.45,402.98 792.55,404.94 792.65,406.73 792.75,408.37 792.85,409.88 792.95,411.26 793.05,412.54 793.15,413.72 793.25,414.81 793.35,415.82 793.45,416.76 793.55,417.63 793.65,418.44 793.75,419.20 793.85,419.91 793.95,420.57 794.05,421.19 794.15,421.77 794.25,422.31 794.35,422.82 794.45,423.30 794.55,423.76 794.65,424.19 794.75,424.59 794.85,424.97 794.95,425.33 795.05,425.68 795.15,426.00 795.25,426.31 795.35,426.60 795.45,426.88 795.55,427.14 795.65,427.39 795.75,427.63 795.85,427.86 795.95,428.07 796.05,428.28 796.15,428.48 796.25,428.67 796.35,428.85 796.45,429.02 796.55,429.19 796.65,429.34 796.75,429.50 796.85,429.64 796.95,429.78 797.05,429.91 797.15,430.04 797.25,430.17 797.35,430.28 797.45,430.40 797.55,430.51 797.65,430.61 797.75,430.71 797.85,430.81 797.95,430.91 798.05,431.00 798.15,431.08 798.25,431.17 798.35,431.25 798.45,431.33 798.55,431.40 798.65,431.48 798.75,431.55 798.85,431.61 798.95,431.68 799.05,431.74 799.15,431.80 799.25,431.86 799.35,431.92 799.45,431.97 799.55,432.02 799.65,432.06 799.75,432.10 799.85,432.13 799.95,432.17 800.05,432.20 800.15,432.23 800.25,432.26 800.35,432.29 800.45,432.31 800.55,432.34 800.65,432.36 800.75,432.38 800.85,432.41 800.95,432.42 801.05,432.44 801.15,432.46 801.25,432.48 801.35,432.49 801.45,432.51 801.55,432.52 801.65,432.53 801.75,432.54 801.85,432.55 801.95,432.56 802.05,432.56 802.15,432.57 802.25,432.57 802.35,432.58 802.45,432.58 802.55,432.58 802.65,432.58 802.75,432.58 802.85,432.58 802.95,432.57 803.05,432.57 803.15,432.56 803.25,432.55 803.35,432.54 803.45,432.53 803.55,432.51 803.65,432.50 803.75,432.48 803.85,432.46 803.95,432.44 804.05,432.42 804.15,432.39 804.25,432.36 804.35,432.33 804.45,432.30 804.55,432.26 804.65,432.22 804.75,432.17 804.85,432.12 804.95,432.06 805.05,432.00 805.15,431.94 805.25,431.86 805.35,431.78 805.45,431.69 805.55,431.59 805.65,431.48 805.75,431.35 805.85,431.21 805.95,431.06 806.05,430.88 806.15,430.68 806.25,430.46 806.35,430.20 806.45,429.91 806.55,429.58 806.65,429.20 806.75,428.76 806.85,428.25 806.95,427.66 807.05,426.98 807.15,426.19 807.25,425.28 807.35,424.25 807.45,423.09 807.55,421.82 807.65,420.49 807.75,419.17 807.85,417.98 807.95,417.07 808.05,416.57 808.15,416.56 808.25,417.04 808.35,417.94 808.45,419.11 808.55,420.40 808.65,421.72 808.75,422.97 808.85,424.11 808.95,425.12 809.05,426.01 809.15,426.77 809.25,427.44 809.35,428.00 809.45,428.49 809.55,428.90 809.65,429.26 809.75,429.57 809.85,429.83 809.95,430.06 810.05,430.25 810.15,430.42 810.25,430.56 810.35,430.67 810.45,430.77 810.55,430.85 810.65,430.91 810.75,430.96 810.85,430.98 810.95,431.00 811.05,430.99 811.15,430.96 811.25,430.92 811.35,430.85 811.45,430.76 811.55,430.64 811.65,430.48 811.75,430.29 811.85,430.06 811.95,429.78 812.05,429.45 812.15,429.09 812.25,428.71 812.35,428.35 812.45,428.07 812.55,427.92 812.65,427.93 812.75,428.11 812.85,428.41 812.95,428.79 813.05,429.20 813.15,429.59 813.25,429.94 813.35,430.26 813.45,430.52 813.55,430.75 813.65,430.94 813.75,431.10 813.85,431.24 813.95,431.36 814.05,431.45 814.15,431.54 814.25,431.61 814.35,431.67 814.45,431.72 814.55,431.77 814.65,431.80 814.75,431.84 814.85,431.86 814.95,431.89 815.05,431.92 815.15,431.97 815.25,432.01 815.35,432.05 815.45,432.08 815.55,432.12 815.65,432.15 815.75,432.18 815.85,432.21 815.95,432.24 816.05,432.27 816.15,432.30 816.25,432.32 816.35,432.35 816.45,432.37 816.55,432.40 816.65,432.42 816.75,432.44 816.85,432.46 816.95,432.49 817.05,432.51 817.15,432.53 817.25,432.55 817.35,432.57 817.45,432.59 817.55,432.60 817.65,432.62 817.75,432.64 817.85,432.66 817.95,432.67 818.05,432.69 818.15,432.69 818.25,432.66 818.35,432.63 818.45,432.60 818.55,432.57 818.65,432.54 818.75,432.51 818.85,432.48 818.95,432.45 819.05,432.42 819.15,432.39 819.25,432.36 819.35,432.33 819.45,432.30 819.55,432.27 819.65,432.23 819.75,432.20 819.85,432.17 819.95,432.13 820.05,432.10 820.15,432.07 820.25,432.03 820.35,432.00 820.45,431.96 820.55,431.93 820.65,431.89 820.75,431.85 820.85,431.82 820.95,431.78 821.05,431.74 821.15,431.70 821.25,431.66 821.35,431.62 821.45,431.57 821.55,431.53 821.65,431.49 821.75,431.44 821.85,431.39 821.95,431.34 822.05,431.29 822.15,431.24 822.25,431.18 822.35,431.12 822.45,431.06 822.55,430.99 822.65,430.92 822.75,430.84 822.85,430.77 822.95,430.72 823.05,430.65 823.15,430.57 823.25,430.48 823.35,430.37 823.45,430.24 823.55,430.09 823.65,429.92 823.75,429.71 823.85,429.47 823.95,429.20 824.05,428.90 824.15,428.59 824.25,428.30 824.35,428.06 824.45,427.92 824.55,427.91 824.65,428.02 824.75,428.23 824.85,428.50 824.95,428.78 825.05,429.05 825.15,429.30 825.25,429.51 825.35,429.69 825.45,429.83 825.55,429.95 825.65,430.04 825.75,430.11 825.85,430.17 825.95,430.20 826.05,430.23 826.15,430.24 826.25,430.24 826.35,430.23 826.45,430.21 826.55,430.18 826.65,430.14 826.75,430.09 826.85,430.03 826.95,429.96 827.05,429.87 827.15,429.78 827.25,429.66 827.35,429.53 827.45,429.39 827.55,429.22 827.65,429.02 827.75,428.80 827.85,428.54 827.95,428.25 828.05,427.90 828.15,427.51 828.25,427.05 828.35,426.51 828.45,425.89 828.55,425.17 828.65,424.34 828.75,423.39 828.85,422.33 828.95,421.17 829.05,419.94 829.15,418.74 829.25,417.65 829.35,416.81 829.45,416.36 829.55,416.36 829.65,416.82 829.75,417.66 829.85,418.75 829.95,419.97 830.05,421.19 830.15,422.36 830.25,423.43 830.35,424.38 830.45,425.22 830.55,425.94 830.65,426.57 830.75,427.11 830.85,427.58 830.95,427.98 831.05,428.33 831.15,428.63 831.25,428.90 831.35,429.13 831.45,429.33 831.55,429.51 831.65,429.67 831.75,429.82 831.85,429.94 831.95,430.05 832.05,430.16 832.15,430.25 832.25,430.33 832.35,430.40 832.45,430.47 832.55,430.53 832.65,430.58 832.75,430.63 832.85,430.68 832.95,430.72 833.05,430.75 833.15,430.79 833.25,430.82 833.35,430.85 833.45,430.87 833.55,430.90 833.65,430.92 833.75,430.93 833.85,430.95 833.95,430.97 834.05,430.98 834.15,430.99 834.25,431.00 834.35,431.01 834.45,431.02 834.55,431.02 834.65,431.03 834.75,431.03 834.85,431.03 834.95,431.03 835.05,431.03 835.15,431.03 835.25,431.03 835.35,431.03 835.45,431.02 835.55,431.01 835.65,431.00 835.75,430.99 835.85,430.98 835.95,430.96 836.05,430.94 836.15,430.92 836.25,430.90 836.35,430.88 836.45,430.85 836.55,430.83 836.65,430.80 836.75,430.77 836.85,430.73 836.95,430.69 837.05,430.65 837.15,430.61 837.25,430.56 837.35,430.51 837.45,430.45 837.55,430.39 837.65,430.32 837.75,430.25 837.85,430.17 837.95,430.08 838.05,429.99 838.15,429.88 838.25,429.77 838.35,429.64 838.45,429.49 838.55,429.33 838.65,429.15 838.75,428.95 838.85,428.73 838.95,428.47 839.05,428.18 839.15,427.85 839.25,427.47 839.35,427.03 839.45,426.53 839.55,425.95 839.65,425.27 839.75,424.48 839.85,423.55 839.95,422.47 840.05,421.20 840.15,419.74 840.25,418.07 840.35,416.21 840.45,414.22 840.55,412.21 840.65,410.36 840.75,408.91 840.85,408.11 840.95,408.10 841.05,408.89 841.15,410.32 841.25,412.16 841.35,414.16 841.45,416.14 841.55,417.99 841.65,419.64 841.75,421.09 841.85,422.34 841.95,423.40 842.05,424.32 842.15,425.09 842.25,425.76 842.35,426.32 842.45,426.81 842.55,427.23 842.65,427.59 842.75,427.90 842.85,428.17 842.95,428.40 843.05,428.61 843.15,428.79 843.25,428.94 843.35,429.07 843.45,429.19 843.55,429.28 843.65,429.37 843.75,429.43 843.85,429.49 843.95,429.53 844.05,429.56 844.15,429.58 844.25,429.58 844.35,429.57 844.45,429.54 844.55,429.50 844.65,429.44 844.75,429.36 844.85,429.26 844.95,429.13 845.05,428.97 845.15,428.77 845.25,428.52 845.35,428.23 845.45,427.88 845.55,427.49 845.65,427.04 845.75,426.59 845.85,426.15 845.95,425.81 846.05,425.62 846.15,425.63 846.25,425.84 846.35,426.20 846.45,426.65 846.55,427.13 846.65,427.59 846.75,428.01 846.85,428.38 846.95,428.69 847.05,428.96 847.15,429.18 847.25,429.37 847.35,429.53 847.45,429.67 847.55,429.78 847.65,429.88 847.75,429.96 847.85,430.03 847.95,430.08 848.05,430.13 848.15,430.17 848.25,430.21 848.35,430.24 848.45,430.26 848.55,430.28 848.65,430.29 848.75,430.32 848.85,430.35 848.95,430.37 849.05,430.40 849.15,430.42 849.25,430.44 849.35,430.45 849.45,430.47 849.55,430.48 849.65,430.49 849.75,430.49 849.85,430.50 849.95,430.50 850.05,430.50 850.15,430.50 850.25,430.50 850.35,430.49 850.45,430.48 850.55,430.47 850.65,430.46 850.75,430.44 850.85,430.42 850.95,430.40 851.05,430.38 851.15,430.35 851.25,430.32 851.35,430.28 851.45,430.24 851.55,430.19 851.65,430.14 851.75,430.09 851.85,430.03 851.95,429.96 852.05,429.88 852.15,429.80 852.25,429.71 852.35,429.61 852.45,429.50 852.55,429.37 852.65,429.24 852.75,429.09 852.85,428.92 852.95,428.74 853.05,428.53 853.15,428.31 853.25,428.05 853.35,427.77 853.45,427.45 853.55,427.10 853.65,426.70 853.75,426.25 853.85,425.74 853.95,425.16 854.05,424.51 854.15,423.76 854.25,422.91 854.35,421.93 854.45,420.80 854.55,419.50 854.65,418.01 854.75,416.30 854.85,414.33 854.95,412.10 855.05,409.58 855.15,406.80 855.25,403.82 855.35,400.73 855.45,397.74 855.55,395.10 855.65,393.11 855.75,392.03 855.85,392.05 855.95,393.15 856.05,395.18 856.15,397.85 856.25,400.87 856.35,403.98 856.45,407.00 856.55,409.81 856.65,412.35 856.75,414.62 856.85,416.61 856.95,418.35 857.05,419.87 857.15,421.20 857.25,422.35 857.35,423.36 857.45,424.24 857.55,425.01 857.65,425.69 857.75,426.29 857.85,426.82 857.95,427.29 858.05,427.71 858.15,428.08 858.25,428.42 858.35,428.72 858.45,428.98 858.55,429.22 858.65,429.44 858.75,429.63 858.85,429.80 858.95,429.95 859.05,430.08 859.15,430.19 859.25,430.29 859.35,430.37 859.45,430.44 859.55,430.49 859.65,430.52 859.75,430.54 859.85,430.53 859.95,430.51 860.05,430.46 860.15,430.39 860.25,430.29 860.35,430.16 860.45,429.99 860.55,429.78 860.65,429.53 860.75,429.22 860.85,428.84 860.95,428.41 861.05,427.91 861.15,427.36 861.25,426.78 861.35,426.20 861.45,425.68 861.55,425.30 861.65,425.11 861.75,425.15 861.85,425.44 861.95,425.91 862.05,426.52 862.15,427.20 862.25,427.87 862.35,428.52 862.45,429.11 862.55,429.64 862.65,430.11 862.75,430.53 862.85,430.89 862.95,431.20 863.05,431.48 863.15,431.72 863.25,431.94 863.35,432.13 863.45,432.30 863.55,432.45 863.65,432.59 863.75,432.71 863.85,432.82 863.95,432.93 864.05,433.02 864.15,433.11 864.25,433.19 864.35,433.26 864.45,433.33 864.55,433.40 864.65,433.46 864.75,433.52 864.85,433.58 864.95,433.63 865.05,433.68 865.15,433.73 865.25,433.78 865.35,433.82 865.45,433.86 865.55,433.90 865.65,433.94 865.75,433.98 865.85,434.02 865.95,434.06 866.05,434.10 866.15,434.14 866.25,434.18 866.35,434.22 866.45,434.26 866.55,434.30 866.65,434.33 866.75,434.37 866.85,434.40 866.95,434.44 867.05,434.47 867.15,434.50 867.25,434.54 867.35,434.57 867.45,434.60 867.55,434.63 867.65,434.66 867.75,434.70 867.85,434.73 867.95,434.76 868.05,434.79 868.15,434.82 868.25,434.85 868.35,434.87 868.45,434.90 868.55,434.93 868.65,434.96 868.75,434.99 868.85,435.02 868.95,435.04 869.05,435.07 869.15,435.10 869.25,435.13 869.35,435.15 869.45,435.18 869.55,435.21 869.65,435.23 869.75,435.26 869.85,435.29 869.95,435.31 870.05,435.34 870.15,435.36 870.25,435.39 870.35,435.41 870.45,435.44 870.55,435.46 870.65,435.49 870.75,435.51 870.85,435.54 870.95,435.56 871.05,435.58 871.15,435.61 871.25,435.63 871.35,435.65 871.45,435.68 871.55,435.70 871.65,435.72 871.75,435.74 871.85,435.77 871.95,435.79 872.05,435.80 872.15,435.81 872.25,435.81 872.35,435.81 872.45,435.82 872.55,435.82 872.65,435.82 872.75,435.83 872.85,435.83 872.95,435.83 873.05,435.83 873.15,435.83 873.25,435.83 873.35,435.83 873.45,435.83 873.55,435.83 873.65,435.83 873.75,435.83 873.85,435.83 873.95,435.83 874.05,435.82 874.15,435.82 874.25,435.81 874.35,435.81 874.45,435.80 874.55,435.80 874.65,435.79 874.75,435.78 874.85,435.77 874.95,435.76 875.05,435.74 875.15,435.73 875.25,435.71 875.35,435.70 875.45,435.68 875.55,435.66 875.65,435.63 875.75,435.61 875.85,435.58 875.95,435.55 876.05,435.51 876.15,435.47 876.25,435.43 876.35,435.39 876.45,435.34 876.55,435.28 876.65,435.23 876.75,435.16 876.85,435.09 876.95,435.02 877.05,434.94 877.15,434.86 877.25,434.78 877.35,434.69 877.45,434.60 877.55,434.51 877.65,434.42 877.75,434.34 877.85,434.26 877.95,434.20 878.05,434.15 878.15,434.12 878.25,434.10 878.35,434.10 878.45,434.13 878.55,434.17 878.65,434.23 878.75,434.30 878.85,434.38 878.95,434.47 879.05,434.57 879.15,434.66 879.25,434.76 879.35,434.86 879.45,434.95 879.55,435.04 879.65,435.13 879.75,435.21 879.85,435.29 879.95,435.36 880.05,435.42 880.15,435.48 880.25,435.54 880.35,435.59 880.45,435.64 880.55,435.69 880.65,435.73 880.75,435.77 880.85,435.81 880.95,435.84 881.05,435.87 881.15,435.90 881.25,435.93 881.35,435.95 881.45,435.97 881.55,435.99 881.65,436.01 881.75,436.03 881.85,436.05 881.95,436.07 882.05,436.08 882.15,436.09 882.25,436.11 882.35,436.12 882.45,436.13 882.55,436.14 882.65,436.15 882.75,436.16 882.85,436.16 882.95,436.17 883.05,436.18 883.15,436.18 883.25,436.19 883.35,436.19 883.45,436.20 883.55,436.20 883.65,436.19 883.75,436.19 883.85,436.18 883.95,436.17 884.05,436.16 884.15,436.16 884.25,436.15 884.35,436.14 884.45,436.13 884.55,436.12 884.65,436.11 884.75,436.10 884.85,436.09 884.95,436.08 885.05,436.07 885.15,436.05 885.25,436.04 885.35,436.03 885.45,436.01 885.55,436.00 885.65,435.98 885.75,435.97 885.85,435.95 885.95,435.94 886.05,435.92 886.15,435.90 886.25,435.88 886.35,435.86 886.45,435.85 886.55,435.83 886.65,435.81 886.75,435.78 886.85,435.76 886.95,435.74 887.05,435.72 887.15,435.69 887.25,435.67 887.35,435.64 887.45,435.62 887.55,435.59 887.65,435.56 887.75,435.53 887.85,435.50 887.95,435.47 888.05,435.44 888.15,435.41 888.25,435.37 888.35,435.34 888.45,435.30 888.55,435.27 888.65,435.23 888.75,435.19 888.85,435.15 888.95,435.10 889.05,435.06 889.15,435.01 889.25,434.96 889.35,434.91 889.45,434.86 889.55,434.81 889.65,434.75 889.75,434.69 889.85,434.63 889.95,434.57 890.05,434.50 890.15,434.43 890.25,434.36 890.35,434.29 890.45,434.21 890.55,434.13 890.65,434.04 890.75,433.97 890.85,433.90 890.95,433.83 891.05,433.75 891.15,433.67 891.25,433.58 891.35,433.48 891.45,433.38 891.55,433.28 891.65,433.16 891.75,433.04 891.85,432.91 891.95,432.78 892.05,432.63 892.15,432.47 892.25,432.30 892.35,432.12 892.45,431.93 892.55,431.72 892.65,431.50 892.75,431.26 892.85,431.00 892.95,430.72 893.05,430.43 893.15,430.10 893.25,429.76 893.35,429.38 893.45,428.97 893.55,428.53 893.65,428.05 893.75,427.52 893.85,426.95 893.95,426.33 894.05,425.64 894.15,424.89 894.25,424.07 894.35,423.16 894.45,422.16 894.55,421.05 894.65,419.82 894.75,418.45 894.85,416.93 894.95,415.23 895.05,413.33 895.15,411.20 895.25,408.80 895.35,406.11 895.45,403.08 895.55,399.66 895.65,395.82 895.75,391.51 895.85,386.70 895.95,381.35 896.05,375.47 896.15,369.11 896.25,362.37 896.35,355.43 896.45,348.60 896.55,342.25 896.65,336.87 896.75,332.94 896.85,330.86 896.95,330.88 897.05,332.98 897.15,336.95 897.25,342.36 897.35,348.74 897.45,355.60 897.55,362.57 897.65,369.34 897.75,375.73 897.85,381.64 897.95,387.02 898.05,391.87 898.15,396.21 898.25,400.08 898.35,403.52 898.45,406.58 898.55,409.31 898.65,411.73 898.75,413.89 898.85,415.82 898.95,417.55 899.05,419.10 899.15,420.49 899.25,421.75 899.35,422.88 899.45,423.91 899.55,424.85 899.65,425.70 899.75,426.47 899.85,427.18 899.95,427.82 900.05,428.42 900.15,428.96 900.25,429.47 900.35,429.93 900.45,430.35 900.55,430.75 900.65,431.11 900.75,431.44 900.85,431.75 900.95,432.02 901.05,432.25 901.15,432.46 901.25,432.66 901.35,432.83 901.45,432.98 901.55,433.11 901.65,433.23 901.75,433.33 901.85,433.41 901.95,433.47 902.05,433.52 902.15,433.53 902.25,433.53 902.35,433.49 902.45,433.42 902.55,433.31 902.65,433.15 902.75,432.94 902.85,432.66 902.95,432.31 903.05,431.89 903.15,431.42 903.25,430.94 903.35,430.54 903.45,430.32 903.55,430.35 903.65,430.62 903.75,431.07 903.85,431.60 903.95,432.12 904.05,432.60 904.15,433.00 904.25,433.34 904.35,433.61 904.45,433.83 904.55,434.01 904.65,434.15 904.75,434.25 904.85,434.34 904.95,434.40 905.05,434.44 905.15,434.47 905.25,434.48 905.35,434.49 905.45,434.48 905.55,434.46 905.65,434.43 905.75,434.39 905.85,434.35 905.95,434.29 906.05,434.23 906.15,434.17 906.25,434.09 906.35,434.01 906.45,433.92 906.55,433.82 906.65,433.72 906.75,433.60 906.85,433.48 906.95,433.34 907.05,433.19 907.15,433.04 907.25,432.87 907.35,432.69 907.45,432.49 907.55,432.29 907.65,432.06 907.75,431.82 907.85,431.56 907.95,431.28 908.05,430.98 908.15,430.66 908.25,430.31 908.35,429.94 908.45,429.53 908.55,429.09 908.65,428.61 908.75,428.10 908.85,427.53 908.95,426.92 909.05,426.25 909.15,425.52 909.25,424.72 909.35,423.84 909.45,422.87 909.55,421.81 909.65,420.63 909.75,419.33 909.85,417.88 909.95,416.26 910.05,414.47 910.15,412.46 910.25,410.20 910.35,407.68 910.45,404.84 910.55,401.64 910.65,398.05 910.75,394.00 910.85,389.47 910.95,384.40 911.05,378.77 911.15,372.59 911.25,365.91 911.35,358.82 911.45,351.53 911.55,344.35 911.65,337.68 911.75,332.02 911.85,327.88 911.95,325.68 912.05,325.68 912.15,327.87 912.25,332.01 912.35,337.67 912.45,344.34 912.55,351.52 912.65,358.80 912.75,365.89 912.85,372.57 912.95,378.75 913.05,384.37 913.15,389.44 913.25,393.97 913.35,398.01 913.45,401.60 913.55,404.80 913.65,407.64 913.75,410.16 913.85,412.41 913.95,414.42 914.05,416.22 914.15,417.83 914.25,419.28 914.35,420.58 914.45,421.76 914.55,422.82 914.65,423.79 914.75,424.67 914.85,425.47 914.95,426.20 915.05,426.87 915.15,427.49 915.25,428.05 915.35,428.57 915.45,429.05 915.55,429.49 915.65,429.90 915.75,430.28 915.85,430.63 915.95,430.95 916.05,431.25 916.15,431.52 916.25,431.77 916.35,432.01 916.45,432.22 916.55,432.43 916.65,432.62 916.75,432.80 916.85,432.96 916.95,433.12 917.05,433.27 917.15,433.40 917.25,433.53 917.35,433.65 917.45,433.76 917.55,433.87 917.65,433.97 917.75,434.06 917.85,434.15 917.95,434.23 918.05,434.30 918.15,434.38 918.25,434.44 918.35,434.51 918.45,434.57 918.55,434.62 918.65,434.67 918.75,434.72 918.85,434.77 918.95,434.81 919.05,434.85 919.15,434.89 919.25,434.92 919.35,434.95 919.45,434.98 919.55,435.01 919.65,435.03 919.75,435.06 919.85,435.08 919.95,435.10 920.05,435.11 920.15,435.13 920.25,435.14 920.35,435.15 920.45,435.17 920.55,435.17 920.65,435.18 920.75,435.19 920.85,435.19 920.95,435.20 921.05,435.20 921.15,435.21 921.25,435.23 921.35,435.24 921.45,435.26 921.55,435.27 921.65,435.29 921.75,435.30 921.85,435.31 921.95,435.32 922.05,435.33 922.15,435.34 922.25,435.34 922.35,435.35 922.45,435.36 922.55,435.36 922.65,435.36 922.75,435.36 922.85,435.37 922.95,435.37 923.05,435.36 923.15,435.36 923.25,435.36 923.35,435.35 923.45,435.35 923.55,435.34 923.65,435.33 923.75,435.33 923.85,435.32 923.95,435.30 924.05,435.29 924.15,435.28 924.25,435.26 924.35,435.25 924.45,435.23 924.55,435.21 924.65,435.19 924.75,435.16 924.85,435.14 924.95,435.11 925.05,435.08 925.15,435.05 925.25,435.02 925.35,435.01 925.45,435.03 925.55,435.04 925.65,435.05 925.75,435.06 925.85,435.06 925.95,435.06 926.05,435.06 926.15,435.05 926.25,435.03 926.35,435.00 926.45,434.97 926.55,434.92 926.65,434.87 926.75,434.80 926.85,434.71 926.95,434.61 927.05,434.48 927.15,434.33 927.25,434.15 927.35,433.93 927.45,433.67 927.55,433.37 927.65,433.02 927.75,432.63 927.85,432.23 927.95,431.85 928.05,431.53 928.15,431.34 928.25,431.30 928.35,431.42 928.45,431.65 928.55,431.95 928.65,432.27 928.75,432.57 928.85,432.82 928.95,433.03 929.05,433.19 929.15,433.30 929.25,433.37 929.35,433.40 929.45,433.39 929.55,433.36 929.65,433.29 929.75,433.19 929.85,433.07 929.95,432.92 930.05,432.74 930.15,432.54 930.25,432.30 930.35,432.04 930.45,431.74 930.55,431.41 930.65,431.04 930.75,430.64 930.85,430.19 930.95,429.69 931.05,429.13 931.15,428.52 931.25,427.84 931.35,427.09 931.45,426.26 931.55,425.33 931.65,424.30 931.75,423.15 931.85,421.86 931.95,420.43 932.05,418.81 932.15,417.01 932.25,414.97 932.35,412.68 932.45,410.10 932.55,407.19 932.65,403.90 932.75,400.20 932.85,396.04 932.95,391.38 933.05,386.21 933.15,380.51 933.25,374.35 933.35,367.81 933.45,361.09 933.55,354.47 933.65,348.32 933.75,343.11 933.85,339.31 933.95,337.33 934.05,337.39 934.15,339.50 934.25,343.41 934.35,348.74 934.45,355.01 934.55,361.76 934.65,368.60 934.75,375.26 934.85,381.54 934.95,387.35 935.05,392.65 935.15,397.43 935.25,401.71 935.35,405.54 935.45,408.94 935.55,411.98 935.65,414.68 935.75,417.10 935.85,419.25 935.95,421.19 936.05,422.92 936.15,424.48 936.25,425.90 936.35,427.17 936.45,428.33 936.55,429.39 936.65,430.35 936.75,431.12 936.85,431.70 936.95,432.21 937.05,432.67 937.15,433.08 937.25,433.44 937.35,433.76 937.45,434.04 937.55,434.28 937.65,434.50 937.75,434.69 937.85,434.85 937.95,434.99 938.05,435.11 938.15,435.21 938.25,435.29 938.35,435.36 938.45,435.41 938.55,435.45 938.65,435.47 938.75,435.49 938.85,435.49 938.95,435.48 939.05,435.47 939.15,435.44 939.25,435.41 939.35,435.37 939.45,435.32 939.55,435.27 939.65,435.21 939.75,435.14 939.85,435.07 939.95,435.00 940.05,434.92 940.15,434.83 940.25,434.75 940.35,434.65 940.45,434.56 940.55,434.46 940.65,434.36 940.75,434.25 940.85,434.22 940.95,434.26 941.05,434.29 941.15,434.32 941.25,434.35 941.35,434.38 941.45,434.40 941.55,434.42 941.65,434.45 941.75,434.46 941.85,434.48 941.95,434.50 942.05,434.51 942.15,434.53 942.25,434.54 942.35,434.55 942.45,434.56 942.55,434.57 942.65,434.57 942.75,434.58 942.85,434.58 942.95,434.59 943.05,434.59 943.15,434.59 943.25,434.59 943.35,434.59 943.45,434.59 943.55,434.59 943.65,434.59 943.75,434.59 943.85,434.58 943.95,434.58 944.05,434.57 944.15,434.57 944.25,434.56 944.35,434.55 944.45,434.55 944.55,434.54 944.65,434.53 944.75,434.52 944.85,434.51 944.95,434.50 945.05,434.49 945.15,434.46 945.25,434.44 945.35,434.41 945.45,434.39 945.55,434.36 945.65,434.34 945.75,434.31 945.85,434.28 945.95,434.25 946.05,434.23 946.15,434.20 946.25,434.17 946.35,434.14 946.45,434.11 946.55,434.09 946.65,434.06 946.75,434.03 946.85,434.00 946.95,433.97 947.05,433.94 947.15,433.91 947.25,433.88 947.35,433.84 947.45,433.81 947.55,433.78 947.65,433.75 947.75,433.72 947.85,433.69 947.95,433.66 948.05,433.62 948.15,433.59 948.25,433.56 948.35,433.53 948.45,433.49 948.55,433.46 948.65,433.43 948.75,433.39 948.85,433.36 948.95,433.33 949.05,433.29 949.15,433.26 949.25,433.23 949.35,433.19 949.45,433.16 949.55,433.12 949.65,433.09 949.75,433.06 949.85,433.02 949.95,432.99 950.05,432.95 950.15,432.92 950.25,432.87 950.35,432.80 950.45,432.73 950.55,432.66 950.65,432.59 950.75,432.52 950.85,432.45 950.95,432.38 951.05,432.31 951.15,432.24 951.25,432.17 951.35,432.10 951.45,432.03 951.55,431.96 951.65,431.89 951.75,431.82 951.85,431.75 951.95,431.68 952.05,431.61 952.15,431.54 952.25,431.47 952.35,431.40 952.45,431.33 952.55,431.26 952.65,431.19 952.75,431.11 952.85,431.04 952.95,430.97 953.05,430.90 953.15,430.83 953.25,430.76 953.35,430.69 953.45,430.62 953.55,430.55 953.65,430.47 953.75,430.40 953.85,430.33 953.95,430.26 954.05,430.19 954.15,430.12 954.25,430.05 954.35,429.97 954.45,429.90 954.55,429.83 954.65,429.76 954.75,429.69 954.85,429.62 954.95,429.54 955.05,429.47 955.15,429.40 955.25,429.33 955.35,429.26 955.45,429.19 955.55,429.11 955.65,429.04 955.75,428.97 955.85,428.90 955.95,428.82 956.05,428.75 956.15,428.68 956.25,428.61 956.35,428.54 956.45,428.47 956.55,428.40 956.65,428.34 956.75,428.27 956.85,428.21 956.95,428.14 957.05,428.08 957.15,428.01 957.25,427.95 957.35,427.88 957.45,427.82 957.55,427.76 957.65,427.69 957.75,427.63 957.85,427.56 957.95,427.50 958.05,427.43 958.15,427.37 958.25,427.30 958.35,427.24 958.45,427.17 958.55,427.11 958.65,427.04 958.75,426.97 958.85,426.91 958.95,426.84 959.05,426.78 959.15,426.71 959.25,426.65 959.35,426.58 959.45,426.52 959.55,426.45 959.65,426.39 959.75,426.32 959.85,426.26 959.95,426.19 960.05,426.13 960.15,426.06 960.25,426.00 960.35,425.93 960.45,425.86 960.55,425.80 960.65,425.73 960.75,425.67 960.85,425.60 960.95,425.54 961.05,425.47 961.15,425.41 961.25,425.34 961.35,425.28 961.45,425.21 961.55,425.14 961.65,425.08 961.75,425.01 961.85,424.95 961.95,424.88 962.05,424.82 962.15,424.75 962.25,424.68 962.35,424.62 962.45,424.55 962.55,424.49 962.65,424.42 962.75,424.36 962.85,424.29 962.95,424.22 963.05,424.16 963.15,424.09 963.25,424.03 963.35,423.96 963.45,423.90 963.55,423.83 963.65,423.76 963.75,423.70 963.85,423.63 963.95,423.60" fill="none" stroke="#ff7048" stroke-width="1.2" stroke-linejoin="round"/></svg>
<svg style="position:absolute;left:157px;top:517px" width="9.6" height="9.6"><rect x="0.5" y="0.5" width="8.6" height="8.6" rx="2" fill="#f3f3f3" stroke="#747474"/></svg>
<div class="t" id="t52" style="left:168.90px;top:517.81px;font-size:10.25px;font-weight:400;color:#1a1a1a;transform:scaleX(0.9659);transform-origin:left center;">Apply Baseline Correction to Query Spectrum</div>
<div style="position:absolute;left:739.6px;top:511.3px;width:151px;height:20px;background:#fbfbfb;border:1px solid #d4d4d4;border-radius:3px;box-shadow:0 1px 0 #d0d0d0"></div>
<div class="t" id="t53" style="left:753.00px;top:517.81px;font-size:10.25px;font-weight:400;color:#1a1a1a;transform:scaleX(0.9346);transform-origin:left center;">Manually Edit Mask Ranges...</div>
<div style="position:absolute;left:903.3px;top:511.3px;width:85px;height:20px;background:#fbfbfb;border:1px solid #d4d4d4;border-radius:3px;box-shadow:0 1px 0 #d0d0d0"></div>
<div class="t" id="t54" style="left:916.30px;top:517.81px;font-size:10.25px;font-weight:400;color:#1a1a1a;transform:scaleX(0.9551);transform-origin:left center;">Edit Spectrum</div>
<div class="t" id="t55" style="left:147.60px;top:556.40px;font-size:10.25px;font-weight:400;color:#1a1a1a;transform:scaleX(0.9376);transform-origin:left center;">Hit List Size Limit:</div>
<div style="position:absolute;left:229px;top:553px;width:29px;height:16px;background:#fff"></div>
<div class="t" id="t56" style="left:231.60px;top:555.71px;font-size:10.25px;font-weight:400;color:#1a1a1a;transform:scaleX(0.9463);transform-origin:left center;">50</div>
<div style="position:absolute;left:258.2px;top:553px;width:12.6px;height:16px;background:#d6d6d6"></div>
<div style="position:absolute;left:259.3px;top:554.6px;width:10.1px;height:6px;background:#ececec"></div>
<div style="position:absolute;left:259.3px;top:562px;width:10.1px;height:5.2px;background:#ececec"></div>
<svg style="position:absolute;left:261px;top:556px" width="6" height="11"><path d="M0.5 3 L3 0.6 L5.5 3 Z M0.5 7.3 L3 9.7 L5.5 7.3 Z" fill="#111"/></svg>
<svg style="position:absolute;left:280px;top:556.6px" width="9.6" height="9.6"><rect x="0.5" y="0.5" width="8.6" height="8.6" rx="2" fill="#f3f3f3" stroke="#747474"/></svg>
<div class="t" id="t57" style="left:292.00px;top:557.01px;font-size:10.25px;font-weight:400;color:#1a1a1a;transform:scaleX(0.9717);transform-origin:left center;">All Hits</div>
<div class="t" id="t58" style="left:344.00px;top:556.90px;font-size:10.25px;font-weight:400;color:#1a1a1a;transform:scaleX(0.9259);transform-origin:left center;">Display Profiles:</div>
<div style="position:absolute;left:419.7px;top:552px;width:155px;height:15.5px;background:#fdfdfd;border:1px solid #dedede;border-radius:3px;box-shadow:0 1px 0 #d0d0d0"></div>
<div class="t" id="t59" style="left:423.00px;top:556.51px;font-size:10.25px;font-weight:400;color:#0b0b0b;transform:scaleX(0.9463);transform-origin:left center;">&lt;no profile&gt;</div>
<svg style="position:absolute;left:567.2px;top:559.25px" width="7" height="4"><path d="M0.5 0.5 L3 3 L5.5 0.5" stroke="#6a6a6a" stroke-width="0.9" fill="none"/></svg>
<div style="position:absolute;left:927px;top:550.2px;width:60.6px;height:18.5px;background:#fdfdfd;border:1.5px solid #6aa5e6;border-radius:3px"></div>
<div class="t" id="t60" style="left:943.30px;top:556.51px;font-size:10.25px;font-weight:700;color:#0b0b0b;transform:scaleX(0.8859);transform-origin:left center;">Search</div>
<div style="position:absolute;left:0px;top:576.5px;width:1000px;height:1.5px;background:#c8c8c8"></div>
<div style="position:absolute;left:12px;top:576.5px;width:92px;height:1.5px;background:#c1ddf3"></div>
</body></html>
